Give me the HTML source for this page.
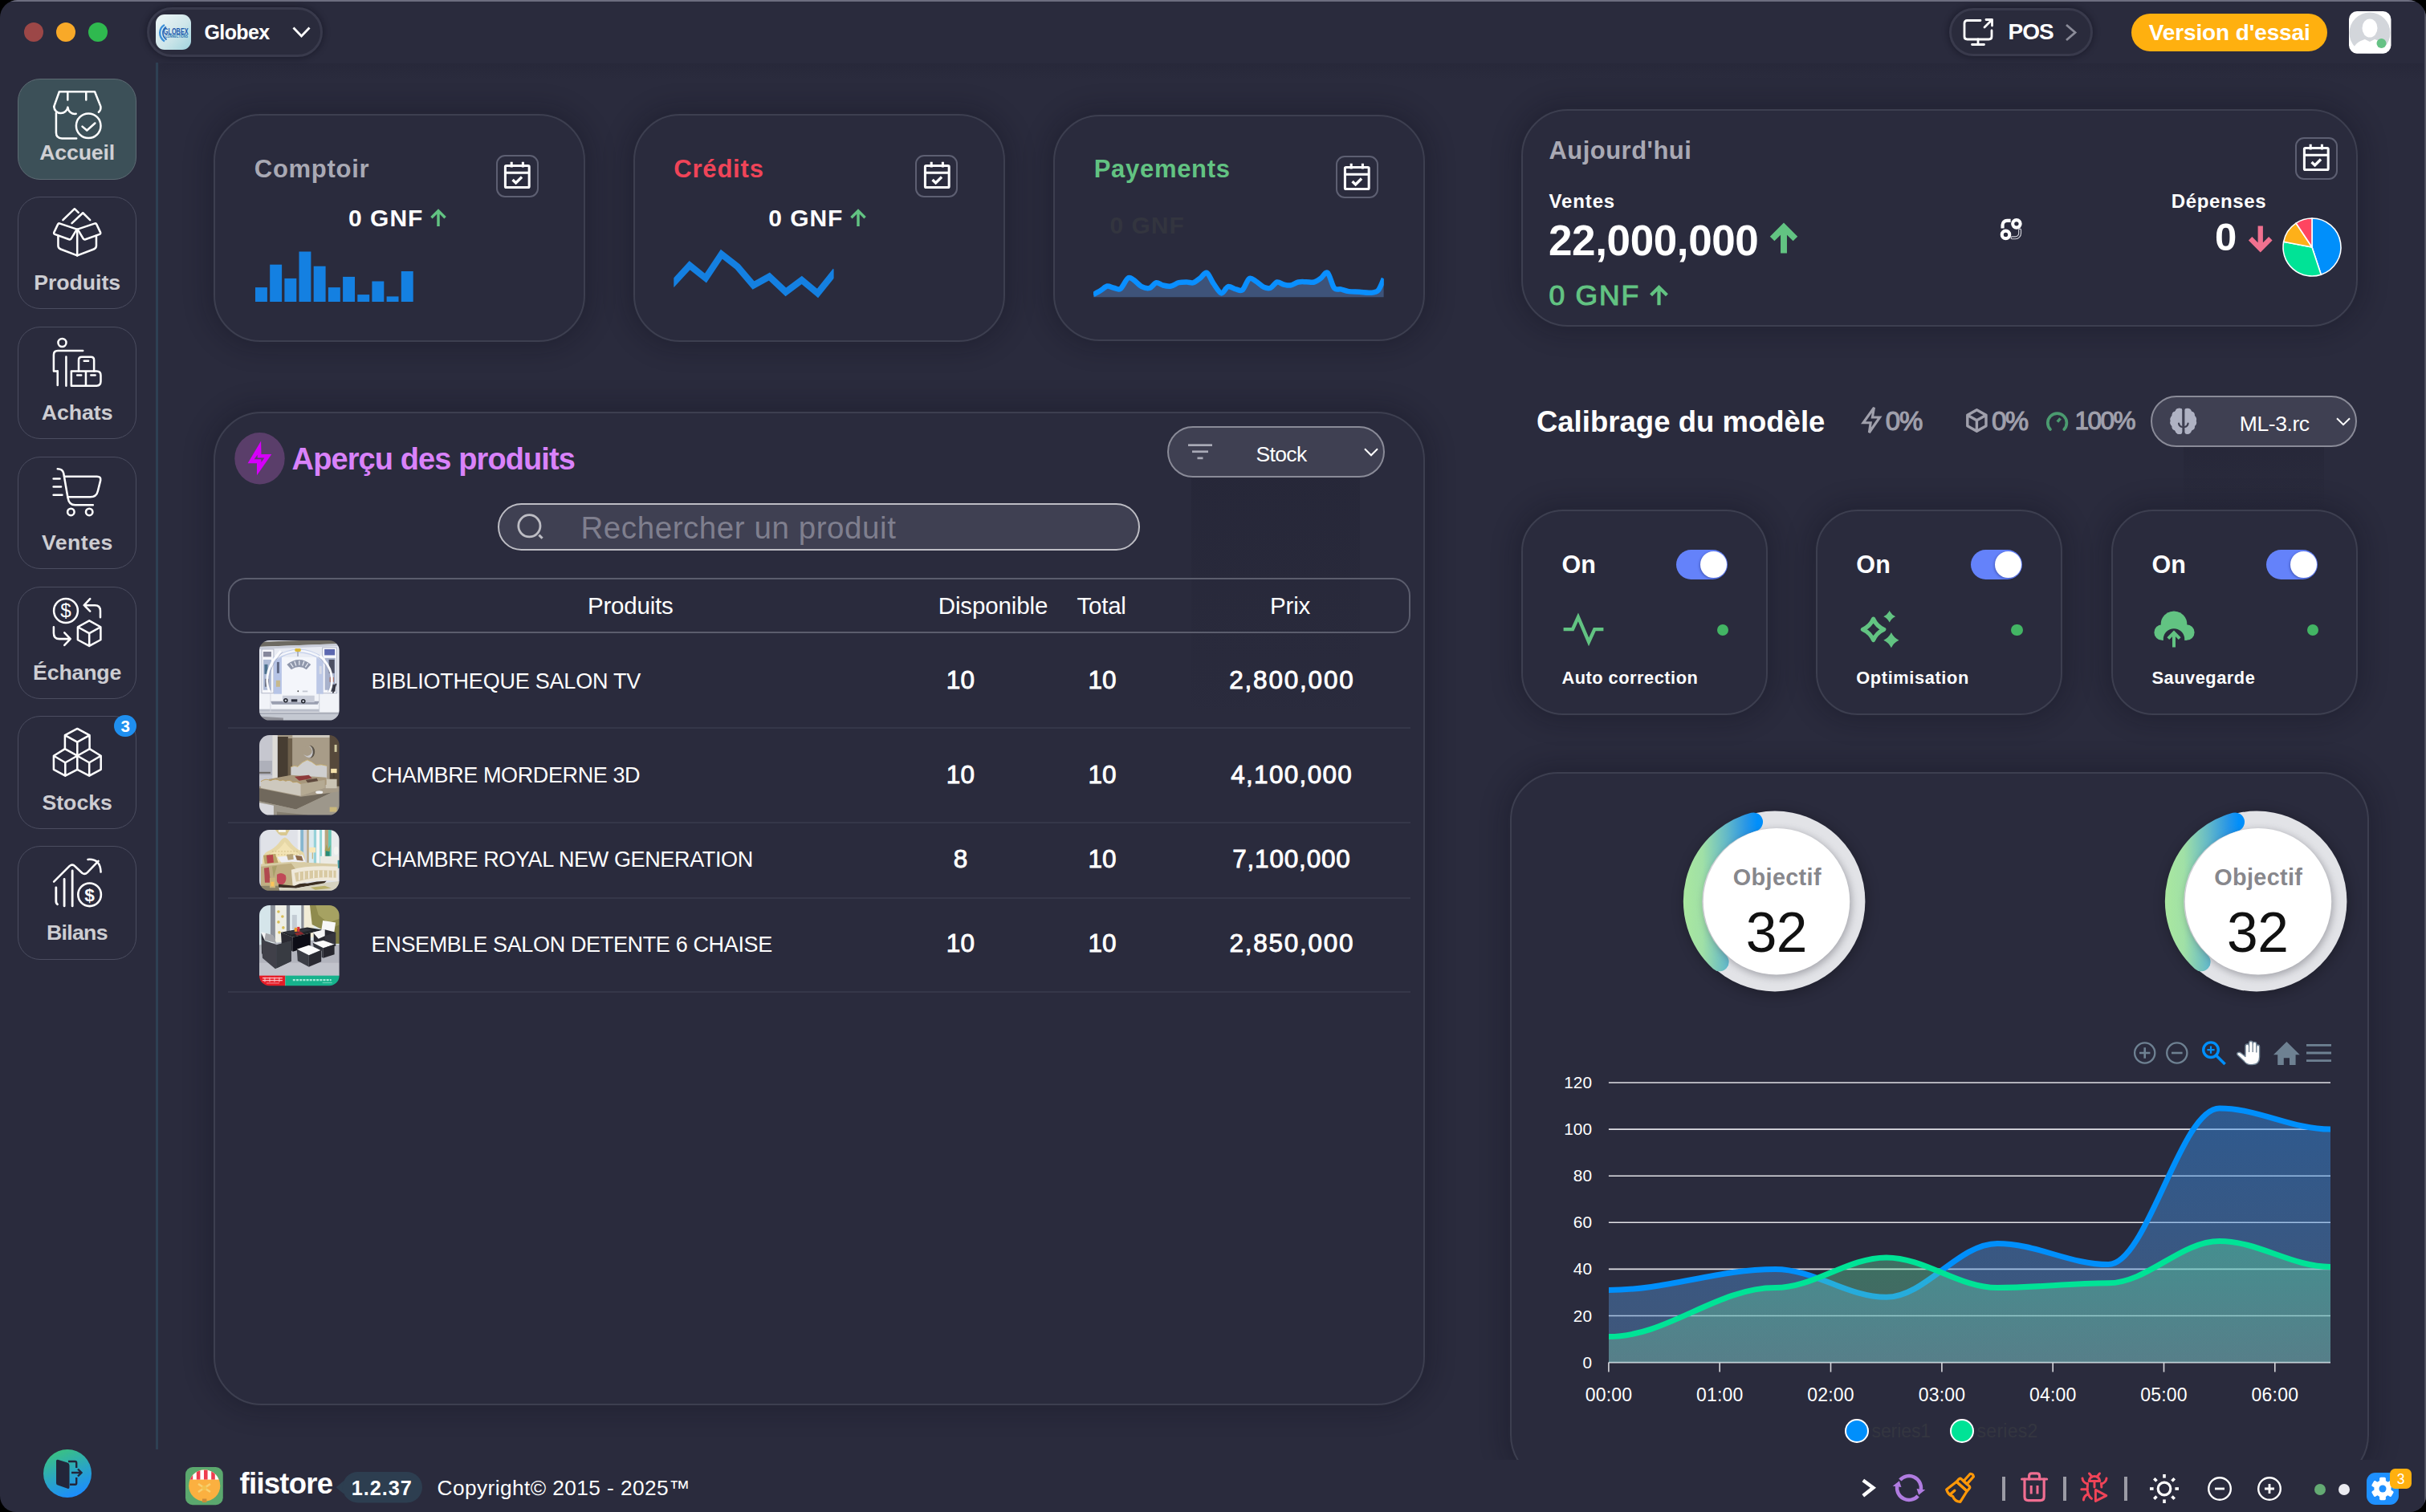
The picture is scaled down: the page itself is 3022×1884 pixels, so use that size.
<!DOCTYPE html>
<html lang="fr"><head><meta charset="utf-8"><title>fiistore</title>
<style>
html,body{margin:0;padding:0;}
body{width:3022px;height:1884px;overflow:hidden;background:#000;font-family:"Liberation Sans",sans-serif;}
#win{position:absolute;left:0;top:0;width:3022px;height:1884px;background:#2a2b3d;border-radius:22px 22px 20px 20px;overflow:hidden;}
.a{position:absolute;box-sizing:border-box;}
.t{position:absolute;white-space:nowrap;line-height:1;}
svg{overflow:visible;}
.card{background:#2a2b3d;border:2px solid #3d3f50;box-shadow:0 0 30px 9px rgba(12,12,24,0.24);}
.pill{background:#2a2b3c;border:3.5px solid #393a4c;box-shadow:0 0 7px 2px rgba(10,10,20,0.34);}
.calbox{border:2px solid #5d5f72;border-radius:11px;}
.sb{border:1.5px solid #4b4d60;border-radius:28px;}
.drop{background:#3f4052;border:2px solid #8a8b98;border-radius:33px;}
</style></head>
<body><div id="win">
<div class="a" style="left:0.0px;top:0.0px;width:3022.0px;height:2.0px;background:#6d6e80;"></div>
<div class="a" style="left:3020.0px;top:0.0px;width:2.0px;height:1884.0px;background:linear-gradient(to right,#3c3d4d,#5a5a68 60%);"></div>
<div class="a" style="left:198.0px;top:78.5px;width:2821.0px;height:21.5px;background:linear-gradient(to bottom, rgba(15,15,28,0.10), rgba(15,15,28,0));"></div>
<div class="a" style="left:29.7px;top:27.7px;width:24.6px;height:24.6px;border-radius:50%;background:#9c4747;"></div>
<div class="a" style="left:69.7px;top:27.7px;width:24.6px;height:24.6px;border-radius:50%;background:#f8a928;"></div>
<div class="a" style="left:109.7px;top:27.7px;width:24.6px;height:24.6px;border-radius:50%;background:#2fb94f;"></div>
<div class="a pill" style="left:183.0px;top:9.0px;width:219.0px;height:62.0px;border-radius:32px;"></div>
<svg class="a" style="left:194.0px;top:18.0px;" width="44.0" height="44.0" viewBox="0 0 44.00 44.00"><defs><linearGradient id="glg" x1="0" y1="0" x2="1" y2="1"><stop offset="0" stop-color="#eef6f7"/><stop offset="0.55" stop-color="#cfe6ea"/><stop offset="1" stop-color="#9fd3dd"/></linearGradient></defs><rect x="0" y="0" width="44" height="44" rx="11" fill="url(#glg)"/><path d="M11 13C3.5 17 3 28 11 33.5" fill="none" stroke="#3b8fd8" stroke-width="2.4"/><path d="M13 15.5C7.5 19 7.5 27 13.5 31.5" fill="none" stroke="#2a6fc0" stroke-width="1.8"/><text x="25.2" y="24.8" font-family="Liberation Sans, sans-serif" font-weight="700" font-size="10.4" fill="#1c58ad" text-anchor="middle" textLength="31" lengthAdjust="spacingAndGlyphs">GLOBEX</text><text x="26" y="29.2" font-family="Liberation Sans, sans-serif" font-weight="700" font-size="4.6" fill="#1f6fb0" text-anchor="middle" textLength="28" lengthAdjust="spacingAndGlyphs">CONNECTIONS</text></svg>
<div class="t" style="left:254.5px;top:28.4px;font-size:25.0px;color:#fff;font-weight:700;letter-spacing:-0.62px;">Globex</div>
<svg class="a" style="left:364.0px;top:33.0px;" width="23.0" height="14.0" viewBox="0 0 23 14"><path d="M1.5 1.5L11.5 12L21.5 1.5" fill="none" stroke="#fff" stroke-width="2.8" stroke-linecap="butt" stroke-linejoin="miter" /></svg>
<div class="a pill" style="left:2428.0px;top:10.0px;width:179.0px;height:60.0px;border-radius:31px;"></div>
<svg class="a" style="left:2445.0px;top:23.0px;" width="39.0" height="34.0" viewBox="0 0 39 34"><path d="M22 2.5H5.5Q2 2.5 2 6V22.5Q2 26 5.5 26H32.5Q36 26 36 22.5V15" fill="none" stroke="#fff" stroke-width="2.8" stroke-linecap="round" stroke-linejoin="round" /><path d="M19 26V32M11.5 32.5H26.5" fill="none" stroke="#fff" stroke-width="2.8" stroke-linecap="round" stroke-linejoin="round" /><path d="M27 11L36.5 1.5M29 1.5H36.5V9" fill="none" stroke="#fff" stroke-width="2.8" stroke-linecap="round" stroke-linejoin="round" /></svg>
<div class="t" style="left:2501.5px;top:25.9px;font-size:28.0px;color:#fff;font-weight:700;letter-spacing:-1.04px;">POS</div>
<svg class="a" style="left:2572.0px;top:29.0px;" width="15.0" height="23.0" viewBox="0 0 15 23"><path d="M2 2L13 11.5L2 21" fill="none" stroke="#8b8c99" stroke-width="2.8" stroke-linecap="butt" stroke-linejoin="miter" /></svg>
<div class="a" style="left:2655.0px;top:17.0px;width:243.5px;height:47.0px;border-radius:24px;background:#ffb00f;"></div>
<div class="t" style="left:2676.7px;top:26.6px;font-size:28.0px;color:#fff;font-weight:700;letter-spacing:-0.12px;">Version d'essai</div>
<svg class="a" style="left:2926.0px;top:14.0px;" width="52.5" height="52.5" viewBox="0 0 52.5 52.5"><defs><clipPath id="avc"><rect x="0" y="0" width="52.5" height="52.5" rx="10"/></clipPath></defs><rect x="0" y="0" width="52.5" height="52.5" rx="10" fill="#fff"/><g clip-path="url(#avc)"><circle cx="26" cy="27" r="25.5" fill="#d3d6db"/><ellipse cx="26" cy="21" rx="9.5" ry="11.5" fill="#fff"/><path d="M4 56C4 40 14 37 20 35L26 38L32 35C38 37 48 40 48 56Z" fill="#fff"/></g><circle cx="40.5" cy="40" r="6" fill="#66c285"/></svg>
<div class="a sb" style="left:22.2px;top:98.2px;width:147.8px;height:125.6px;background:#3c5058;border-color:#5d6b73;"></div>
<svg class="a" style="left:66.0px;top:113.0px;" width="60.4" height="60.4" viewBox="0 0 60 60"><path d="M7.8 1.2H51.7L59 19.5Q59.6 24 56.5 26.5M7.8 1.2L1.2 19.8" fill="none" stroke="#fff" stroke-width="2.5" stroke-linecap="round" stroke-linejoin="round" /><path d="M18.2 1.2V11.5M41 1.2V11.5" fill="none" stroke="#fff" stroke-width="2.5" stroke-linecap="round" stroke-linejoin="round" /><path d="M1.2 19.8A8.6 8.6 0 0 0 18.3 20.5A8.8 8.8 0 0 0 28.5 28.6" fill="none" stroke="#fff" stroke-width="2.5" stroke-linecap="round" stroke-linejoin="round" /><path d="M3.9 27.5V52Q3.9 59 11 59H29" fill="none" stroke="#fff" stroke-width="2.5" stroke-linecap="round" stroke-linejoin="round" /><circle cx="43.9" cy="43.5" r="15.2" fill="none" stroke="#fff" stroke-width="2.5" stroke-linecap="round" stroke-linejoin="round" /><path d="M36.3 44.3L42 49.2L52 40.2" fill="none" stroke="#fff" stroke-width="2.5" stroke-linecap="round" stroke-linejoin="round" /></svg>
<div class="t" style="left:96.2px;top:177.4px;font-size:26.7px;color:#d0d0d4;font-weight:700;transform:translateX(-50%);margin-left:-0.07px;letter-spacing:-0.14px;">Accueil</div>
<div class="a sb" style="left:22.2px;top:245.0px;width:147.8px;height:140.0px;"></div>
<svg class="a" style="left:66.0px;top:258.6px;" width="60.4" height="60.4" viewBox="0 0 60 60"><path d="M12.3 15L26.7 1.2L31.5 5.8M23.4 19L37 6.2L45.9 15" fill="none" stroke="#fff" stroke-width="2.5" stroke-linecap="round" stroke-linejoin="round" /><path d="M8 19.3L29.5 26.4L22.4 38.3Q21.5 39.6 19.8 39L2.2 32.6Q0.6 31.9 1.4 30.2L6 20.5Q6.7 19 8 19.3Z" fill="none" stroke="#fff" stroke-width="2.5" stroke-linecap="round" stroke-linejoin="round" /><path d="M52 19.3L30.5 26.4L37.6 38.3Q38.5 39.6 40.2 39L57.8 32.6Q59.4 31.9 58.6 30.2L54 20.5Q53.3 19 52 19.3Z" fill="none" stroke="#fff" stroke-width="2.5" stroke-linecap="round" stroke-linejoin="round" /><path d="M6.4 34.5V47Q6.4 50 9.5 51.2L30 59L50.5 51.2Q53.6 50 53.6 47V34.5" fill="none" stroke="#fff" stroke-width="2.5" stroke-linecap="round" stroke-linejoin="round" /><path d="M30 26.7V59" fill="none" stroke="#fff" stroke-width="2.5" stroke-linecap="round" stroke-linejoin="round" /></svg>
<div class="t" style="left:96.2px;top:339.4px;font-size:26.7px;color:#cdcdd2;font-weight:700;transform:translateX(-50%);margin-left:-0.02px;letter-spacing:-0.04px;">Produits</div>
<div class="a sb" style="left:22.2px;top:406.6px;width:147.8px;height:140.8px;"></div>
<svg class="a" style="left:66.0px;top:421.2px;" width="60.4" height="60.4" viewBox="0 0 60 60"><circle cx="11.4" cy="5.9" r="5" fill="none" stroke="#fff" stroke-width="2.5" stroke-linecap="round" stroke-linejoin="round" /><path d="M37 15.9H6Q0.9 15.9 0.9 21V41.3H5.7" fill="none" stroke="#fff" stroke-width="2.5" stroke-linecap="round" stroke-linejoin="round" /><path d="M5.7 41.3V58.5M16.3 23.3V59.3" fill="none" stroke="#fff" stroke-width="2.5" stroke-linecap="round" stroke-linejoin="round" /><path d="M31.8 41.3V27.5Q31.8 23.7 35.6 23.7H47Q50.8 23.7 50.8 27.5V41.3" fill="none" stroke="#fff" stroke-width="2.5" stroke-linecap="round" stroke-linejoin="round" /><path d="M40.7 59.3H22.7V41.3H54Q59.1 41.3 59.1 46.5V54Q59.1 59.3 54 59.3H40.7V41.3" fill="none" stroke="#fff" stroke-width="2.5" stroke-linecap="round" stroke-linejoin="round" /><path d="M38.5 28.6H43.8M30 46.2H35M47 46.2H52.3" fill="none" stroke="#fff" stroke-width="2.5" stroke-linecap="round" stroke-linejoin="round" /></svg>
<div class="t" style="left:96.2px;top:501.2px;font-size:26.7px;color:#cdcdd2;font-weight:700;transform:translateX(-50%);margin-left:-0.04px;letter-spacing:-0.07px;">Achats</div>
<div class="a sb" style="left:22.2px;top:568.6px;width:147.8px;height:140.8px;"></div>
<svg class="a" style="left:66.0px;top:583.1px;" width="60.4" height="60.4" viewBox="0 0 60 60"><path d="M5.7 1.2Q11.8 1.2 13.1 6.5L18.4 37Q19.8 46 27.5 46H49.5" fill="none" stroke="#fff" stroke-width="2.5" stroke-linecap="round" stroke-linejoin="round" /><path d="M15.2 10.6H54.5Q59.6 10.6 58.8 15.5L55.4 29Q53.8 36 46 36H18.4" fill="none" stroke="#fff" stroke-width="2.5" stroke-linecap="round" stroke-linejoin="round" /><path d="M0.6 13.3H8.5M0.6 23.3H10M0.6 33.5H11.4" fill="none" stroke="#fff" stroke-width="2.5" stroke-linecap="round" stroke-linejoin="round" /><circle cx="22.2" cy="54.6" r="4.2" fill="none" stroke="#fff" stroke-width="2.5" stroke-linecap="round" stroke-linejoin="round" /><circle cx="44.9" cy="54.6" r="4.2" fill="none" stroke="#fff" stroke-width="2.5" stroke-linecap="round" stroke-linejoin="round" /></svg>
<div class="t" style="left:96.2px;top:663.2px;font-size:26.7px;color:#cdcdd2;font-weight:700;transform:translateX(-50%);margin-left:0.21px;letter-spacing:0.42px;">Ventes</div>
<div class="a sb" style="left:22.2px;top:730.6px;width:147.8px;height:140.8px;"></div>
<svg class="a" style="left:66.0px;top:745.1px;" width="60.4" height="60.4" viewBox="0 0 60 60"><circle cx="15.9" cy="15.9" r="14.8" fill="none" stroke="#fff" stroke-width="2.5" stroke-linecap="round" stroke-linejoin="round" /><text x="15.9" y="24.2" text-anchor="middle" font-family="Liberation Sans, sans-serif" font-size="24" fill="#fff">$</text><path d="M45.9 1.2L38.5 9.1L45.9 16.5M38.8 9.1H52Q58.6 9.1 58.6 16V24" fill="none" stroke="#fff" stroke-width="2.5" stroke-linecap="round" stroke-linejoin="round" /><path d="M0.9 36V43.4Q0.9 50.8 8 50.8H21.4M14.2 43L21.6 50.8L14.2 58.6" fill="none" stroke="#fff" stroke-width="2.5" stroke-linecap="round" stroke-linejoin="round" /><path d="M44.9 28.2L59 36V51.9L44.9 59.5L30.7 51.9V36ZM30.7 36L44.9 43.8L59 36M44.9 43.8V59.5" fill="none" stroke="#fff" stroke-width="2.5" stroke-linecap="round" stroke-linejoin="round" /></svg>
<div class="t" style="left:96.2px;top:824.5px;font-size:26.7px;color:#cdcdd2;font-weight:700;transform:translateX(-50%);margin-left:-0.09px;letter-spacing:-0.18px;">Échange</div>
<div class="a sb" style="left:22.2px;top:892.2px;width:147.8px;height:140.8px;"></div>
<svg class="a" style="left:66.0px;top:907.3px;" width="60.4" height="60.4" viewBox="0 0 60 60"><path d="M30.1 0.9L45.3 9.1V26L30.1 34.5L14.8 26V9.1ZM14.8 9.1L30.1 17.6L45.3 9.1M30.1 17.6V34.5" fill="none" stroke="#fff" stroke-width="2.5" stroke-linecap="round" stroke-linejoin="round" /><path d="M14.8 26L0.9 34.5V51.5L15.2 59.3L30.1 51.5V34.5M0.9 34.5L15.2 43L30.1 34.5M15.2 43V59.3" fill="none" stroke="#fff" stroke-width="2.5" stroke-linecap="round" stroke-linejoin="round" /><path d="M45.3 26L59.3 34.5V51.5L44.9 59.3L30.1 51.5M59.3 34.5L44.9 43L30.1 34.5M44.9 43V59.3" fill="none" stroke="#fff" stroke-width="2.5" stroke-linecap="round" stroke-linejoin="round" /></svg>
<div class="t" style="left:96.2px;top:987.2px;font-size:26.7px;color:#cdcdd2;font-weight:700;transform:translateX(-50%);margin-left:0.00px;">Stocks</div>
<div class="a" style="left:142.3px;top:890.7px;width:27.6px;height:27.6px;border-radius:50%;background:#1f8fef;"></div>
<div class="t" style="left:156.1px;top:894.6px;font-size:20.5px;color:#fff;font-weight:700;transform:translateX(-50%);margin-left:0.00px;">3</div>
<div class="a sb" style="left:22.2px;top:1054.3px;width:147.8px;height:141.6px;"></div>
<svg class="a" style="left:66.0px;top:1068.5px;" width="60.4" height="60.4" viewBox="0 0 60 60"><path d="M1.1 29.5L20.7 9.8Q24 7 27.3 10.4L36 18.6Q39.3 21.2 42.6 18L56.2 3.8" fill="none" stroke="#fff" stroke-width="2.5" stroke-linecap="round" stroke-linejoin="round" /><path d="M43.1 1.9Q58.5 0.5 59.2 17.5" fill="none" stroke="#fff" stroke-width="2.5" stroke-linecap="round" stroke-linejoin="round" /><path d="M3.8 36.6V53.5Q3.8 56.5 5.5 57.3M14 26.2V59.5M24 15.8V59.5" fill="none" stroke="#fff" stroke-width="2.8" stroke-linecap="round" stroke-linejoin="round" /><circle cx="45.3" cy="45.5" r="14.2" fill="none" stroke="#fff" stroke-width="2.6" stroke-linecap="round" stroke-linejoin="round" /><text x="45.3" y="53.3" text-anchor="middle" font-family="Liberation Sans, sans-serif" font-size="22.5" font-weight="700" fill="#fff">$</text></svg>
<div class="t" style="left:96.2px;top:1149.4px;font-size:26.7px;color:#cdcdd2;font-weight:700;transform:translateX(-50%);margin-left:-0.34px;letter-spacing:-0.69px;">Bilans</div>
<div class="a" style="left:193.5px;top:78.0px;width:3.0px;height:1728.0px;background:#2e4053;"></div>
<svg class="a" style="left:53.5px;top:1806.2px;" width="60.0" height="60.0" viewBox="0 0 60 60"><defs><linearGradient id="lgo" x1="0.2" y1="0" x2="0.6" y2="1"><stop offset="0" stop-color="#3cc47c"/><stop offset="1" stop-color="#1b8cff"/></linearGradient></defs><circle cx="30" cy="30" r="30" fill="url(#lgo)"/><path d="M16 14.5Q16 12.5 18 12.8L30 16.5Q32.5 17.3 32.5 20V47Q32.5 49.6 30.2 48.8L18 44.6Q16 44 16 42Z" fill="#23263a"/><path d="M31 15H39.5Q41.2 15 41.2 16.8V23M41.2 35V42Q41.2 43.8 39.5 43.8H33" fill="none" stroke="#23263a" stroke-width="2.4"/><path d="M35 29H47M43 24.5L47.5 29L43 33.5" fill="none" stroke="#23263a" stroke-width="2.4"/></svg>
<div class="a card" style="left:266.0px;top:142.0px;width:462.5px;height:284.0px;border-radius:58px;"></div>
<div class="t" style="left:316.8px;top:194.8px;font-size:31.0px;color:#a9a9b4;font-weight:700;letter-spacing:0.72px;">Comptoir</div>
<div class="a calbox" style="left:617.5px;top:192.5px;width:53.0px;height:53.0px;"></div>
<svg class="a" style="left:623.7px;top:198.2px;" width="40.6" height="40.6" viewBox="0 0 24 24"><rect x="3.2" y="5" width="17.6" height="16" rx="0.8" fill="none" stroke="#fff" stroke-width="1.8" stroke-linecap="butt" stroke-linejoin="miter" /><path d="M3.2 10.2H20.8" fill="none" stroke="#fff" stroke-width="1.8" stroke-linecap="butt" stroke-linejoin="miter" /><path d="M7.8 2.2V6.2M16.2 2.2V6.2" fill="none" stroke="#fff" stroke-width="1.8" stroke-linecap="butt" stroke-linejoin="miter" /><path d="M8.6 15.4L11 17.7L15.4 13.3" fill="none" stroke="#fff" stroke-width="2.0" stroke-linecap="butt" stroke-linejoin="miter" /></svg>
<div class="t" style="left:434.0px;top:257.3px;font-size:30.0px;color:#fff;font-weight:700;letter-spacing:1.01px;">0 GNF</div>
<svg class="a" style="left:534.5px;top:261.0px;overflow:visible;" width="22.0" height="22.0" viewBox="2 2 20 20.5"><path d="M12 21.5V3.5M4 11.5L12 3.5L20 11.5" fill="none" stroke="#62c382" stroke-width="3.2" stroke-linecap="butt" stroke-linejoin="miter" /></svg>
<svg class="a" style="left:317.5px;top:313.0px;" width="197.0" height="63.0" viewBox="0 0 197.00 63.00"><rect x="0.0" y="45.1" width="14.9" height="17.9" fill="#1480e1"/><rect x="18.2" y="16.7" width="14.9" height="46.3" fill="#1480e1"/><rect x="36.4" y="33.9" width="14.9" height="29.1" fill="#1480e1"/><rect x="54.5" y="0.5" width="14.9" height="62.5" fill="#1480e1"/><rect x="72.7" y="18.7" width="14.9" height="44.3" fill="#1480e1"/><rect x="90.9" y="45.1" width="14.9" height="17.9" fill="#1480e1"/><rect x="109.1" y="31.9" width="14.9" height="31.1" fill="#1480e1"/><rect x="127.3" y="54.1" width="14.9" height="8.9" fill="#1480e1"/><rect x="145.4" y="37.5" width="14.9" height="25.5" fill="#1480e1"/><rect x="163.6" y="56.4" width="14.9" height="6.6" fill="#1480e1"/><rect x="181.8" y="25.0" width="14.9" height="38.0" fill="#1480e1"/></svg>
<div class="a card" style="left:789.0px;top:142.0px;width:462.5px;height:284.0px;border-radius:58px;"></div>
<div class="t" style="left:839.3px;top:194.8px;font-size:31.0px;color:#f04458;font-weight:700;letter-spacing:0.80px;">Crédits</div>
<div class="a calbox" style="left:1140.3px;top:192.5px;width:53.0px;height:53.0px;"></div>
<svg class="a" style="left:1146.5px;top:198.2px;" width="40.6" height="40.6" viewBox="0 0 24 24"><rect x="3.2" y="5" width="17.6" height="16" rx="0.8" fill="none" stroke="#fff" stroke-width="1.8" stroke-linecap="butt" stroke-linejoin="miter" /><path d="M3.2 10.2H20.8" fill="none" stroke="#fff" stroke-width="1.8" stroke-linecap="butt" stroke-linejoin="miter" /><path d="M7.8 2.2V6.2M16.2 2.2V6.2" fill="none" stroke="#fff" stroke-width="1.8" stroke-linecap="butt" stroke-linejoin="miter" /><path d="M8.6 15.4L11 17.7L15.4 13.3" fill="none" stroke="#fff" stroke-width="2.0" stroke-linecap="butt" stroke-linejoin="miter" /></svg>
<div class="t" style="left:957.3px;top:257.3px;font-size:30.0px;color:#fff;font-weight:700;letter-spacing:0.93px;">0 GNF</div>
<svg class="a" style="left:1057.5px;top:261.0px;overflow:visible;" width="22.0" height="22.0" viewBox="2 2 20 20.5"><path d="M12 21.5V3.5M4 11.5L12 3.5L20 11.5" fill="none" stroke="#62c382" stroke-width="3.2" stroke-linecap="butt" stroke-linejoin="miter" /></svg>
<svg class="a" style="left:830.0px;top:300.0px;" width="220.0" height="80.0" viewBox="0 0 220.00 80.00"><defs><clipPath id="ccl"><rect x="9.3" y="0" width="199.3" height="80"/></clipPath></defs><path d="M9.3 52.2L29.1 30.7L49.0 46.6L68.8 16.8L88.7 32.3L108.5 55.5L128.3 44.6L148.8 63.8L168.7 48.9L188.5 65.4L208.4 40.6" fill="none" stroke="#1480e1" stroke-width="8.2" stroke-linejoin="miter" stroke-linecap="square" clip-path="url(#ccl)"/></svg>
<div class="a card" style="left:1312.4px;top:143.0px;width:462.4px;height:282.0px;border-radius:58px;"></div>
<div class="t" style="left:1362.7px;top:195.1px;font-size:31.0px;color:#62c382;font-weight:700;letter-spacing:0.70px;">Payements</div>
<div class="a calbox" style="left:1663.6px;top:193.8px;width:53.0px;height:53.0px;"></div>
<svg class="a" style="left:1669.8px;top:199.5px;" width="40.6" height="40.6" viewBox="0 0 24 24"><rect x="3.2" y="5" width="17.6" height="16" rx="0.8" fill="none" stroke="#fff" stroke-width="1.8" stroke-linecap="butt" stroke-linejoin="miter" /><path d="M3.2 10.2H20.8" fill="none" stroke="#fff" stroke-width="1.8" stroke-linecap="butt" stroke-linejoin="miter" /><path d="M7.8 2.2V6.2M16.2 2.2V6.2" fill="none" stroke="#fff" stroke-width="1.8" stroke-linecap="butt" stroke-linejoin="miter" /><path d="M8.6 15.4L11 17.7L15.4 13.3" fill="none" stroke="#fff" stroke-width="2.0" stroke-linecap="butt" stroke-linejoin="miter" /></svg>
<div class="t" style="left:1382.5px;top:266.3px;font-size:30.0px;color:#33353f;font-weight:700;letter-spacing:0.99px;">0 GNF</div>
<svg class="a" style="left:1362.0px;top:330.0px;" width="362.0" height="42.0" viewBox="0 0 362.00 42.00"><defs><clipPath id="pcl"><rect x="0" y="-20" width="361.8" height="60.4"/></clipPath></defs><g clip-path="url(#pcl)"><path d="M0.0 37.1C1.4 36.3 6.2 33.8 8.9 32.1C11.7 30.4 14.6 27.0 17.2 26.5C19.9 26.0 22.8 28.3 25.5 28.8C28.1 29.3 30.9 31.7 33.7 29.8C36.5 27.8 40.4 18.3 43.0 16.6C45.6 14.8 47.5 17.2 50.3 18.9C53.0 20.6 57.0 25.6 60.2 27.1C63.4 28.7 67.2 29.6 70.1 28.8C73.0 28.0 75.7 22.7 78.4 22.2C81.0 21.7 83.7 24.8 86.7 25.5C89.6 26.2 93.4 27.0 96.6 26.5C99.7 26.0 103.3 23.0 106.5 22.2C109.7 21.4 113.5 21.5 116.4 21.5C119.3 21.5 122.0 23.0 124.7 22.2C127.3 21.4 130.3 18.5 132.9 16.6C135.6 14.6 138.6 8.9 141.2 9.9C143.9 11.0 146.6 19.1 149.5 23.2C152.4 27.2 156.5 34.8 159.4 35.4C162.3 36.0 164.8 27.9 167.7 27.1C170.6 26.3 174.7 29.8 177.6 30.4C180.5 31.1 183.2 33.2 185.9 31.1C188.5 29.0 191.5 18.9 194.1 17.2C196.8 15.5 199.5 18.8 202.4 20.5C205.3 22.2 209.4 26.5 212.3 27.8C215.2 29.1 217.9 29.8 220.6 28.8C223.2 27.8 226.2 22.2 228.8 21.5C231.5 20.8 234.5 23.9 237.1 24.5C239.8 25.1 242.5 26.0 245.4 25.5C248.3 25.0 252.1 22.2 255.3 21.5C258.5 20.8 262.0 21.2 265.2 21.2C268.4 21.2 272.2 22.3 275.1 21.5C278.1 20.8 280.8 18.4 283.4 16.6C286.1 14.7 289.0 8.0 291.7 9.9C294.3 11.9 297.3 25.5 299.9 28.8C302.6 32.1 305.3 29.8 308.2 30.4C311.1 31.1 314.4 32.6 318.1 33.1C321.8 33.6 327.1 33.5 331.4 33.8C335.6 34.0 340.9 35.0 344.6 34.7C348.3 34.5 351.8 34.9 354.5 32.1C357.3 29.3 360.6 19.6 361.8 17.2L361.8 40.4L0 40.4Z" fill="#3e5379"/><path d="M0.0 37.1C1.4 36.3 6.2 33.8 8.9 32.1C11.7 30.4 14.6 27.0 17.2 26.5C19.9 26.0 22.8 28.3 25.5 28.8C28.1 29.3 30.9 31.7 33.7 29.8C36.5 27.8 40.4 18.3 43.0 16.6C45.6 14.8 47.5 17.2 50.3 18.9C53.0 20.6 57.0 25.6 60.2 27.1C63.4 28.7 67.2 29.6 70.1 28.8C73.0 28.0 75.7 22.7 78.4 22.2C81.0 21.7 83.7 24.8 86.7 25.5C89.6 26.2 93.4 27.0 96.6 26.5C99.7 26.0 103.3 23.0 106.5 22.2C109.7 21.4 113.5 21.5 116.4 21.5C119.3 21.5 122.0 23.0 124.7 22.2C127.3 21.4 130.3 18.5 132.9 16.6C135.6 14.6 138.6 8.9 141.2 9.9C143.9 11.0 146.6 19.1 149.5 23.2C152.4 27.2 156.5 34.8 159.4 35.4C162.3 36.0 164.8 27.9 167.7 27.1C170.6 26.3 174.7 29.8 177.6 30.4C180.5 31.1 183.2 33.2 185.9 31.1C188.5 29.0 191.5 18.9 194.1 17.2C196.8 15.5 199.5 18.8 202.4 20.5C205.3 22.2 209.4 26.5 212.3 27.8C215.2 29.1 217.9 29.8 220.6 28.8C223.2 27.8 226.2 22.2 228.8 21.5C231.5 20.8 234.5 23.9 237.1 24.5C239.8 25.1 242.5 26.0 245.4 25.5C248.3 25.0 252.1 22.2 255.3 21.5C258.5 20.8 262.0 21.2 265.2 21.2C268.4 21.2 272.2 22.3 275.1 21.5C278.1 20.8 280.8 18.4 283.4 16.6C286.1 14.7 289.0 8.0 291.7 9.9C294.3 11.9 297.3 25.5 299.9 28.8C302.6 32.1 305.3 29.8 308.2 30.4C311.1 31.1 314.4 32.6 318.1 33.1C321.8 33.6 327.1 33.5 331.4 33.8C335.6 34.0 340.9 35.0 344.6 34.7C348.3 34.5 351.8 34.9 354.5 32.1C357.3 29.3 360.6 19.6 361.8 17.2" fill="none" stroke="#0a8fff" stroke-width="6.5" stroke-linejoin="round" stroke-linecap="butt"/></g></svg>
<div class="a card" style="left:1895.4px;top:136.2px;width:1042.0px;height:271.2px;border-radius:58px;"></div>
<div class="t" style="left:1929.4px;top:172.2px;font-size:31.0px;color:#a9a9b4;font-weight:700;letter-spacing:0.48px;">Aujourd'hui</div>
<div class="t" style="left:1929.4px;top:238.7px;font-size:24.0px;color:#fff;font-weight:700;letter-spacing:0.89px;">Ventes</div>
<div class="t" style="left:1929.0px;top:272.6px;font-size:53.0px;color:#fff;font-weight:700;letter-spacing:-0.38px;">22,000,000</div>
<svg class="a" style="left:2204.0px;top:279.8px;overflow:visible;" width="36.0" height="37.7" viewBox="2 2 20 20.5"><path d="M12 21.5V3.5M4 11.5L12 3.5L20 11.5" fill="none" stroke="#62c382" stroke-width="4.4" stroke-linecap="butt" stroke-linejoin="miter" /></svg>
<div class="t" style="left:1929.4px;top:350.9px;font-size:35.5px;color:#62c382;font-weight:400;letter-spacing:1.79px;-webkit-text-stroke:1.10px #62c382;">0 GNF</div>
<svg class="a" style="left:2053.5px;top:355.5px;overflow:visible;" width="25.0" height="25.5" viewBox="2 2 20 20.5"><path d="M12 21.5V3.5M4 11.5L12 3.5L20 11.5" fill="none" stroke="#62c382" stroke-width="3.4" stroke-linecap="butt" stroke-linejoin="miter" /></svg>
<svg class="a" style="left:2491.5px;top:272.2px;" width="27.0" height="27.2" viewBox="0 0 27 27.2"><circle cx="19.9" cy="6.85" r="4.75" fill="none" stroke="#fff" stroke-width="4.1"/><circle cx="6.5" cy="20.4" r="4.75" fill="none" stroke="#fff" stroke-width="4.1"/><path d="M2.55 12.6V8.3A5.5 5.5 0 0 1 8.05 2.8H12.6" fill="none" stroke="#fff" stroke-width="4.2"/><path d="M24.1 14.6V18.8A5.5 5.5 0 0 1 18.6 24.3H14.4" fill="none" stroke="#d2d2da" stroke-width="4.0" stroke-linecap="round"/><path d="M24.1 14.6V18.8A5.5 5.5 0 0 1 18.6 24.3H14.4" fill="none" stroke="#2a2b3d" stroke-width="1.7" stroke-linecap="round"/></svg>
<div class="a calbox" style="left:2858.7px;top:170.7px;width:53.0px;height:53.0px;"></div>
<svg class="a" style="left:2864.9px;top:176.4px;" width="40.6" height="40.6" viewBox="0 0 24 24"><rect x="3.2" y="5" width="17.6" height="16" rx="0.8" fill="none" stroke="#fff" stroke-width="1.8" stroke-linecap="butt" stroke-linejoin="miter" /><path d="M3.2 10.2H20.8" fill="none" stroke="#fff" stroke-width="1.8" stroke-linecap="butt" stroke-linejoin="miter" /><path d="M7.8 2.2V6.2M16.2 2.2V6.2" fill="none" stroke="#fff" stroke-width="1.8" stroke-linecap="butt" stroke-linejoin="miter" /><path d="M8.6 15.4L11 17.7L15.4 13.3" fill="none" stroke="#fff" stroke-width="2.0" stroke-linecap="butt" stroke-linejoin="miter" /></svg>
<div class="t" style="left:2704.8px;top:238.7px;font-size:24.0px;color:#fff;font-weight:700;letter-spacing:0.64px;">Dépenses</div>
<div class="t" style="left:2759.0px;top:271.1px;font-size:49.0px;color:#fff;font-weight:700;letter-spacing:2.25px;">0</div>
<svg class="a" style="left:2799.5px;top:279.5px;" width="31.5" height="32.3" viewBox="2 1.5 20 20.5"><path d="M12 2.5V20.5M4 12.5L12 20.5L20 12.5" fill="none" stroke="#f0718f" stroke-width="4.0" stroke-linecap="butt" stroke-linejoin="miter" /></svg>
<svg class="a" style="left:2842.2px;top:269.6px;" width="76.0" height="76.0" viewBox="-38 -38 76 76"><path d="M0 0L0.00 -36.00A36.0 36.0 0 0 1 11.30 34.18Z" fill="#008ffb" stroke="#fff" stroke-width="1.6" stroke-linejoin="round"/><path d="M0 0L11.30 34.18A36.0 36.0 0 0 1 -35.36 -6.75Z" fill="#00e396" stroke="#fff" stroke-width="1.6" stroke-linejoin="round"/><path d="M0 0L-35.36 -6.75A36.0 36.0 0 0 1 -19.97 -29.95Z" fill="#feb019" stroke="#fff" stroke-width="1.6" stroke-linejoin="round"/><path d="M0 0L-19.97 -29.95A36.0 36.0 0 0 1 -0.00 -36.00Z" fill="#ff4560" stroke="#fff" stroke-width="1.6" stroke-linejoin="round"/></svg>
<div class="a card" style="left:266.0px;top:513.0px;width:1508.8px;height:1238.0px;border-radius:60px;"></div>
<svg class="a" style="left:291.9px;top:538.7px;" width="63.0" height="64.4" viewBox="0 0 63 64.4"><ellipse cx="31.5" cy="32.2" rx="31.2" ry="32.2" fill="#5a3e6a"/><path d="M33.1 10.4L16.6 38.3L28.0 38.3L28.0 53.3L46.3 26.9L33.5 26.9Z" fill="#d500f9"/><path d="M28.7 27.7L24.7 33.2L33.4 33.2L33.4 37.1L37.4 31.5L28.7 31.5Z" fill="#5a3e6a"/></svg>
<div class="t" style="left:363.6px;top:552.8px;font-size:38.0px;color:#d982fa;font-weight:700;letter-spacing:-0.90px;">Aperçu des produits</div>
<div class="a" style="left:1484.0px;top:596.0px;width:210.0px;height:309.0px;background:linear-gradient(to bottom, rgba(20,20,34,0.16), rgba(20,20,34,0.0));"></div>
<div class="a drop" style="left:1454.0px;top:531.3px;width:271.0px;height:63.7px;"></div>
<svg class="a" style="left:1479.5px;top:553.0px;" width="30.0" height="20.0" viewBox="0 0 30 20"><rect x="0" y="0.3" width="30" height="2.7" fill="#a9aab6"/><rect x="5" y="8.4" width="20" height="2.7" fill="#a9aab6"/><rect x="11.5" y="16.5" width="7" height="2.7" fill="#a9aab6"/></svg>
<div class="t" style="left:1564.5px;top:552.8px;font-size:26.5px;color:#fff;font-weight:400;letter-spacing:-0.66px;">Stock</div>
<svg class="a" style="left:1699.0px;top:558.0px;" width="18.0" height="11.0" viewBox="0 0 18 11"><path d="M1 1.2L9 9.3L17 1.2" fill="none" stroke="#fff" stroke-width="2.0" stroke-linecap="butt" stroke-linejoin="miter" /></svg>
<div class="a" style="left:620.4px;top:626.8px;width:799.2px;height:59.6px;background:#3f4052;border:2.5px solid #bdbdc4;border-radius:30px;"></div>
<svg class="a" style="left:640.0px;top:636.0px;" width="42.0" height="42.0" viewBox="0 0 42 42"><circle cx="19.4" cy="19.3" r="13.6" fill="none" stroke="#bdbdc4" stroke-width="2.8"/><path d="M31.4 30.6L35.6 34.8" stroke="#bdbdc4" stroke-width="3" fill="none"/></svg>
<div class="t" style="left:723.5px;top:638.5px;font-size:38.5px;color:#7f7f8e;font-weight:400;letter-spacing:0.57px;">Rechercher un produit</div>
<div class="a" style="left:284.0px;top:719.7px;width:1472.8px;height:69.5px;border:2px solid #5b5d6d;border-radius:22px;"></div>
<div class="t" style="left:785.4px;top:740.2px;font-size:29.5px;color:#fff;font-weight:400;transform:translateX(-50%);margin-left:-0.11px;letter-spacing:-0.22px;">Produits</div>
<div class="t" style="left:1237.0px;top:740.2px;font-size:29.5px;color:#fff;font-weight:400;transform:translateX(-50%);margin-left:-0.06px;letter-spacing:-0.13px;">Disponible</div>
<div class="t" style="left:1372.2px;top:740.2px;font-size:29.5px;color:#fff;font-weight:400;transform:translateX(-50%);margin-left:-0.13px;letter-spacing:-0.26px;">Total</div>
<div class="t" style="left:1607.2px;top:740.2px;font-size:29.5px;color:#fff;font-weight:400;transform:translateX(-50%);margin-left:-0.10px;letter-spacing:-0.20px;">Prix</div>
<svg class="a" style="left:322.8px;top:798.0px;" width="99.6" height="99.6" viewBox="0 0 100 100.00"><defs><clipPath id="thc0"><rect x="0" y="0" width="100" height="100.00" rx="12.5"/></clipPath><filter id="thb0"><feGaussianBlur stdDeviation="0.45"/></filter></defs><g clip-path="url(#thc0)"><g filter="url(#thb0)"><rect x="-2" y="-2" width="104" height="104" fill="#e9ecf4"/><path d="M-2 2L102 -2V4L-2 8Z" fill="#6d6a62"/><path d="M-2 8L102 4V7L-2 11Z" fill="#c9cdd9"/><rect x="-2" y="89" width="104" height="13" fill="#c4c8d1"/><path d="M-2 95L30 97V102H-2Z" fill="#8f9098"/><path d="M-2 89H102V92H-2Z" fill="#a9adb8"/><rect x="0" y="66" width="100" height="24" fill="#f1f3f8"/><rect x="3" y="11" width="15" height="55" fill="#f6f7fb" stroke="#aeb3c4" stroke-width="0.9"/><rect x="79" y="9" width="18" height="57" fill="#f6f7fb" stroke="#aeb3c4" stroke-width="0.9"/><rect x="5" y="14" width="10" height="6.5" fill="#85879b"/><rect x="5" y="24" width="10" height="38" fill="#aebbd6"/><rect x="6.5" y="30" width="4" height="12" fill="#4b6f8c"/><rect x="7" y="48" width="5" height="10" fill="#6f7587"/><rect x="81.5" y="11" width="13" height="7.5" fill="#5b67b0"/><rect x="82" y="22" width="13" height="40" fill="#a8b2cc"/><rect x="87" y="24" width="7" height="17" fill="#4c4f62"/><rect x="88" y="46" width="5" height="6" fill="#b0563c"/><rect x="89" y="55" width="6" height="9" fill="#3d4050"/><rect x="18" y="20" width="11" height="47" fill="#b6c4e6"/><rect x="71" y="20" width="9" height="47" fill="#bcc8e6"/><rect x="22" y="27" width="3" height="14" fill="#5e6884"/><rect x="21" y="50" width="5" height="8" fill="#c6b88c"/><rect x="75" y="32" width="3" height="10" fill="#d8dbe6"/><path d="M18 24Q50 2 80 24" fill="none" stroke="#c5d0ea" stroke-width="5"/><path d="M20 22Q50 4 78 22" fill="none" stroke="#f4f6fb" stroke-width="2.4"/><rect x="28" y="21" width="43.5" height="48" fill="#f4f6fb"/><path d="M34.5 30Q50 18 64.5 30L59 36.5Q50 30 40 36.5Z" fill="#8f97ab"/><path d="M39 28.6L42.5 33.5M44 26.2L46 31.6M50 25.2V30.8M56 26.2L54 31.6M61 28.6L57.5 33.5" stroke="#e8ebf3" stroke-width="1.3"/><path d="M12.5 64Q3 38 27 13" fill="none" stroke="#fbfcfe" stroke-width="2.8"/><path d="M14.8 64Q6 39 29 14.5" fill="none" stroke="#9ea6bf" stroke-width="0.7"/><path d="M88 64Q97.5 40 76 19" fill="none" stroke="#fbfcfe" stroke-width="2.8"/><path d="M85.8 64Q95 40.5 74 20.5" fill="none" stroke="#9ea6bf" stroke-width="0.7"/><path d="M92 66L96 54" stroke="#30323e" stroke-width="1.6"/><rect x="44.5" y="10" width="7.5" height="4" rx="1.5" fill="#d9b83a"/><rect x="47.6" y="14" width="1.2" height="6" fill="#8c93a6"/><path d="M14 76H75L73 80H16Z" fill="#9a9fb0"/><rect x="29" y="69" width="40" height="8.4" fill="#c9cdd9"/><circle cx="33" cy="75" r="2.8" fill="#23252f"/><circle cx="33" cy="75" r="1.3" fill="#c9cdd9"/><circle cx="55" cy="76" r="2.8" fill="#23252f"/><circle cx="55" cy="76" r="1.3" fill="#c9cdd9"/><rect x="40" y="73.6" width="7.5" height="3.2" fill="#2b2e3c"/><circle cx="48.5" cy="63.5" r="0.9" fill="#444"/><rect x="54" y="62.8" width="6.5" height="1.8" fill="#c3c7d2"/><rect x="0" y="86" width="75" height="3.2" fill="#b9bdc9"/><path d="M75 66V90" stroke="#c5c9d4" stroke-width="0.9"/><path d="M14 66V90" stroke="#d2d5de" stroke-width="0.9"/></g></g></svg>
<div class="t" style="left:462.6px;top:835.5px;font-size:27.0px;color:#fff;font-weight:400;letter-spacing:-0.22px;">BIBLIOTHEQUE SALON TV</div>
<div class="t" style="left:1196.4px;top:832.1px;font-size:31.5px;color:#fff;font-weight:400;transform:translateX(-50%);margin-left:0.00px;-webkit-text-stroke:0.90px #fff;">10</div>
<div class="t" style="left:1373.0px;top:832.1px;font-size:31.5px;color:#fff;font-weight:400;transform:translateX(-50%);margin-left:0.00px;-webkit-text-stroke:0.90px #fff;">10</div>
<div class="t" style="left:1608.5px;top:832.1px;font-size:31.5px;color:#fff;font-weight:400;transform:translateX(-50%);margin-left:0.90px;letter-spacing:1.81px;-webkit-text-stroke:0.90px #fff;">2,800,000</div>
<div class="a" style="left:284.0px;top:905.6px;width:1472.8px;height:2.0px;background:#353749;"></div>
<svg class="a" style="left:322.8px;top:916.0px;" width="99.6" height="99.6" viewBox="0 0 100 100.00"><defs><clipPath id="thc1"><rect x="0" y="0" width="100" height="100.00" rx="12.5"/></clipPath><filter id="thb1"><feGaussianBlur stdDeviation="0.45"/></filter></defs><g clip-path="url(#thc1)"><g filter="url(#thb1)"><rect x="-2" y="-2" width="104" height="104" fill="#a59a87"/><rect x="-2" y="-2" width="25" height="66" fill="#c6c7cf"/><rect x="-2" y="32" width="18" height="18" fill="#aeb0ba"/><rect x="16.5" y="-2" width="6" height="64" fill="#dedcd8"/><rect x="-2" y="46" width="16" height="2" fill="#6d6a66"/><rect x="23" y="2" width="13" height="54" fill="#473c30"/><rect x="36" y="4" width="5.5" height="50" fill="#6d5f4c"/><rect x="41.5" y="-2" width="47" height="50" fill="#a89c88"/><rect x="41.5" y="-2" width="47" height="5" fill="#cfcac0"/><rect x="88" y="-2" width="14" height="66" fill="#56493b"/><rect x="94" y="12" width="3" height="9" fill="#cfc9a0"/><circle cx="62" cy="21" r="7" fill="#c9c9cd"/><circle cx="59.8" cy="19.8" r="6.2" fill="#a89c88"/><path d="M63 12.5A8.6 8.6 0 0 1 63.5 29A11 11 0 0 0 63 12.5Z" fill="#5a5348"/><path d="M39.5 40Q44 37 48 39.5Q54 33 60 31Q66 33 71 37.5Q78 36 84.5 38.5V56H39.5Z" fill="#cfcfcf"/><path d="M39.5 40Q44 37 48 39.5Q54 33 60 31Q66 33 71 37.5Q78 36 84.5 38.5" fill="none" stroke="#c8ae6a" stroke-width="0.9"/><rect x="89.5" y="42" width="7.5" height="5.4" fill="#f5e2ac"/><rect x="92.6" y="47.4" width="1.3" height="6" fill="#4a3f33"/><rect x="83" y="55" width="14" height="11.5" fill="#cbc4b4"/><path d="M12 55L40 50L84 53V62L50 70L12 62Z" fill="#a8987c"/><path d="M44 52L62 50L66 54L50 57Z" fill="#8d3b3b"/><path d="M58 56L72 54L76 63L64 65Z" fill="#5e4a3c"/><path d="M2 58Q8 53.5 14 57Q20 53.5 26 57Q30 55 33 57.5Q38 55 42 59Q47 57 52 61V76L2 66Z" fill="#cdc8bd"/><path d="M2 58Q8 53.5 14 57Q20 53.5 26 57Q30 55 33 57.5Q38 55 42 59Q47 57 52 61" fill="none" stroke="#b89a5a" stroke-width="0.9"/><path d="M52 61L82 56V66L52 76Z" fill="#b5aa93"/><path d="M-2 66L52 77L90 72L46 93L-2 82Z" fill="#6f675b"/><path d="M-2 82L46 93L90 72L102 70V102H-2Z" fill="#9d978b"/><path d="M-2 84L18 88V102H-2Z" fill="#d9d9de"/><path d="M22 96L60 100V102H22Z" fill="#857e70"/><ellipse cx="75" cy="71.5" rx="4.6" ry="1.9" fill="#eeeeef"/><rect x="88" y="90" width="9" height="6" fill="#c9b77c"/></g></g></svg>
<div class="t" style="left:462.6px;top:952.9px;font-size:27.0px;color:#fff;font-weight:400;letter-spacing:-0.39px;">CHAMBRE MORDERNE 3D</div>
<div class="t" style="left:1196.4px;top:949.5px;font-size:31.5px;color:#fff;font-weight:400;transform:translateX(-50%);margin-left:0.00px;-webkit-text-stroke:0.90px #fff;">10</div>
<div class="t" style="left:1373.0px;top:949.5px;font-size:31.5px;color:#fff;font-weight:400;transform:translateX(-50%);margin-left:0.00px;-webkit-text-stroke:0.90px #fff;">10</div>
<div class="t" style="left:1608.5px;top:949.5px;font-size:31.5px;color:#fff;font-weight:400;transform:translateX(-50%);margin-left:0.66px;letter-spacing:1.32px;-webkit-text-stroke:0.90px #fff;">4,100,000</div>
<div class="a" style="left:284.0px;top:1023.7px;width:1472.8px;height:2.0px;background:#353749;"></div>
<svg class="a" style="left:322.8px;top:1034.0px;" width="99.6" height="75.8" viewBox="0 0 100 76.10"><defs><clipPath id="thc2"><rect x="0" y="0" width="100" height="76.10" rx="12.5"/></clipPath><filter id="thb2"><feGaussianBlur stdDeviation="0.45"/></filter></defs><g clip-path="url(#thc2)"><g filter="url(#thb2)"><rect x="-2" y="-2" width="104" height="80.1" fill="#e0e2e8"/><rect x="48" y="-2" width="3.5" height="50" fill="#eef0f2"/><rect x="51.5" y="-2" width="4" height="50" fill="#86b6cf"/><rect x="55.5" y="-2" width="4" height="50" fill="#d4d7dc"/><rect x="59.5" y="-2" width="2.6" height="50" fill="#b9a987"/><rect x="62.1" y="-2" width="6" height="50" fill="#dcebef"/><rect x="68.1" y="-2" width="3.4" height="50" fill="#96d2d8"/><rect x="71.5" y="-2" width="4" height="50" fill="#f4f6f6"/><rect x="75.5" y="-2" width="3" height="50" fill="#8fd6d6"/><rect x="78.5" y="-2" width="3.5" height="50" fill="#f6f7f7"/><rect x="82" y="-2" width="4.4" height="50" fill="#b7a57e"/><rect x="86.4" y="-2" width="3.8" height="50" fill="#67c6b4"/><rect x="90.2" y="-2" width="12" height="50" fill="#e9ebec"/><path d="M20 0H38L34 7H27L24 5Z" fill="#d9c890"/><rect x="24" y="0" width="9" height="3" fill="#f5f3ea"/><rect x="62.5" y="22" width="8" height="6.4" fill="#fae8b8"/><rect x="66" y="28.4" width="1.2" height="8" fill="#c8b27a"/><rect x="83" y="25" width="5" height="8" fill="#2c8c78"/><path d="M82 26L84 18L86 24L89 19L88 27Z" fill="#a3a05a"/><ellipse cx="96" cy="26" rx="3" ry="5" fill="#f4f4f0"/><rect x="76" y="33" width="26" height="12" fill="#ecebe4"/><rect x="98" y="38" width="4" height="10" fill="#3f9aa0"/><path d="M4 44Q3 30 10 27Q18 24 24 17Q29 10 32 9.5Q35 10 40 17Q46 24 52 26Q58 28 57 40V46H4Z" fill="#e6d7a6"/><path d="M9 40Q10 30 18 28Q26 24 32 15Q38 24 46 28Q53 30 54 40Z" fill="#f2e3b4"/><path d="M12 31H52M10 35H54M16 27L48 27" stroke="#c9b276" stroke-width="0.8" stroke-dasharray="1.6 2.2"/><path d="M22 34L54 31L58 40L30 44Z" fill="#eeeef2"/><path d="M34 31L42 30L43 37L36 38Z" fill="#b7a47a"/><path d="M45 32L53 33L55 39L47 38Z" fill="#8d6a4c"/><path d="M5 32L20 30L24 42L7 44Z" fill="#b9a368"/><path d="M9 32L17 31L18 41L10 42Z" fill="#b8454c"/><path d="M2 43L40 40L98 43V50L46 54L2 50Z" fill="#d8cca6"/><path d="M2 46L40 42L46 50L44 72L2 70Z" fill="#bfae82"/><path d="M6 48L12 47L14 66L7 66Z" fill="#b04850"/><path d="M22 56Q28 52 33 57Q35 64 30 68Q24 70 22 64Z" fill="#c04a58"/><path d="M16 46L22 45L18 60Z" fill="#a9a06a"/><path d="M40 50Q60 44 98 46V64Q74 62 56 66Q46 68 42 72Z" fill="#efe9da"/><path d="M44 54Q62 49 96 51V60Q72 58 46 65Z" fill="#d8c9a2"/><path d="M50 53V63M56 52V62M62 51.4V61M68 51V60.4M74 50.8V60M80 50.6V59.8M86 50.6V59.8M92 50.8V60" stroke="#f3eee2" stroke-width="1.5"/><path d="M24 68L44 70Q52 66 60 67Q72 64 84 64L80 68Q60 70 46 73L24 72Z" fill="#3a2e22"/><rect x="-2" y="68" width="104" height="10.1" fill="#d9d4bf" opacity="0"/><path d="M-2 70L24 70L26 78.1H-2Z" fill="#8c8468"/><path d="M26 72L46 73Q62 70 84 66L102 64V78.1H26Z" fill="#d6d2c0"/><path d="M64 72L82 70L90 73L70 75Z" fill="#b9b06a"/><rect x="13" y="60" width="7" height="12.5" fill="#cdb87c"/><rect x="14.4" y="65" width="4" height="5.6" fill="#fbc45a"/><rect x="-2" y="-2" width="4" height="80.1" fill="#c9ccd6"/></g></g></svg>
<div class="t" style="left:462.6px;top:1057.9px;font-size:27.0px;color:#fff;font-weight:400;letter-spacing:-0.37px;">CHAMBRE ROYAL NEW GENERATION</div>
<div class="t" style="left:1196.4px;top:1054.5px;font-size:31.5px;color:#fff;font-weight:400;transform:translateX(-50%);margin-left:0.00px;-webkit-text-stroke:0.90px #fff;">8</div>
<div class="t" style="left:1373.0px;top:1054.5px;font-size:31.5px;color:#fff;font-weight:400;transform:translateX(-50%);margin-left:0.00px;-webkit-text-stroke:0.90px #fff;">10</div>
<div class="t" style="left:1608.5px;top:1054.5px;font-size:31.5px;color:#fff;font-weight:400;transform:translateX(-50%);margin-left:0.41px;letter-spacing:0.82px;-webkit-text-stroke:0.90px #fff;">7,100,000</div>
<div class="a" style="left:284.0px;top:1117.6px;width:1472.8px;height:2.0px;background:#353749;"></div>
<svg class="a" style="left:322.8px;top:1128.0px;" width="99.6" height="100.2" viewBox="0 0 100 100.60"><defs><clipPath id="thc3"><rect x="0" y="0" width="100" height="100.60" rx="12.5"/></clipPath><filter id="thb3"><feGaussianBlur stdDeviation="0.45"/></filter></defs><g clip-path="url(#thc3)"><g filter="url(#thb3)"><rect x="-2" y="-2" width="104" height="104" fill="#dfe8ea"/><rect x="-2" y="-2" width="16" height="60" fill="#d5e5ea"/><rect x="14" y="-2" width="6" height="46" fill="#8b9099"/><rect x="20" y="-2" width="14" height="48" fill="#efefe6"/><circle cx="24" cy="8" r="1.8" fill="#d9bf5a"/><circle cx="29" cy="14" r="1.8" fill="#d9bf5a"/><circle cx="24" cy="21" r="1.8" fill="#d9bf5a"/><circle cx="30" cy="28" r="1.8" fill="#d9bf5a"/><circle cx="25" cy="34" r="1.8" fill="#d9bf5a"/><rect x="34" y="-2" width="4.5" height="40" fill="#7f848e"/><rect x="38.5" y="-2" width="14" height="34" fill="#e4eef1"/><rect x="41" y="12" width="6" height="18" fill="#c3ccd4"/><rect x="52.5" y="-2" width="3.4" height="36" fill="#8a8e96"/><rect x="55.9" y="-2" width="12" height="42" fill="#f1ecd6"/><path d="M63 -2H102V48H86L78 30L66 24Z" fill="#8f8b4d"/><path d="M70 -2H102V16L86 22L74 12Z" fill="#a6a262"/><path d="M84 30L102 24V48H88Z" fill="#7d7a42"/><rect x="-2" y="50" width="104" height="40" fill="#b2b4bd"/><rect x="-2" y="72" width="104" height="18" fill="#c1c3cb"/><path d="M-2 50L30 46L66 44L102 50V54H-2Z" fill="#b2b4bd"/><path d="M27 34L60 27.5L80 31L42 40Z" fill="#24252b"/><path d="M27 34L42 40V58L28 49Z" fill="#2b2c33"/><path d="M42 40L64 34.6V51L42 58Z" fill="#0f0f12"/><path d="M30 34L58 29L66 31L40 37Z" fill="#3d4048" opacity="0.6"/><rect x="44" y="28" width="3.2" height="5" fill="#ec9a2e"/><rect x="47.4" y="27" width="3.2" height="6" fill="#d8323c"/><path d="M44 35L52 33L56 36L47 38Z" fill="#8e2a2e"/><path d="M79.5 19L95.5 21.5L93.5 35L77.5 32Z" fill="#f8f8f8"/><path d="M68 34L82 30.5L95.5 34V51L82 52L68 45Z" fill="#2b2c33"/><path d="M67 34L82 30L82 38.5L74 42Z" fill="#f6f6f6"/><path d="M82 38.5L95.5 34V51L82 52Z" fill="#35363e"/><path d="M2.5 33.5L17 37.5L21.5 47.5L6.5 43.5Z" fill="#f3f3f3"/><path d="M2.5 35L6.5 43.5V65L3 60Z" fill="#2b2c33"/><path d="M3 43L22 49.5L40 44.5V70L20 79.5L4 66Z" fill="#3f4149"/><path d="M22 49.5L40 44.5V70L22 78.6Z" fill="#393a42"/><path d="M6.5 43.5L21.5 47.5L17 37.5L8 35Z" fill="#55575f" opacity="0.5"/><path d="M47 55L62 50L77.5 56L62 62.5Z" fill="#fbfbfb"/><path d="M47 55L62 62.5V77L48 69.5Z" fill="#3a3c44"/><path d="M62 62.5L77.5 56V70.5L62 77Z" fill="#2a2b32"/><path d="M67 47L80 44L94 49L80 53.5Z" fill="#fbfbfb"/><path d="M67 47L80 53.5V66L78 65V57L68 52Z" fill="#33353c"/><path d="M80 53.5L94 49V61.5L80 66Z" fill="#27282e"/><rect x="-2" y="88" width="34.5" height="14" fill="#e51c28"/><rect x="32.5" y="88" width="70" height="14" fill="#19b28c"/><path d="M4 91H29M4 94H29M7 90V96M13 90V96M19 90V96M25 90V96" stroke="#ffd9dc" stroke-width="1.1" opacity="0.85"/><path d="M9 97.4H25" stroke="#f6a9ae" stroke-width="0.8"/><path d="M42 93.6H90" stroke="#b4efe0" stroke-width="2.2" stroke-dasharray="3 1.2" opacity="0.9"/><path d="M79 97H91" stroke="#8adfc9" stroke-width="0.8"/></g></g></svg>
<div class="t" style="left:462.6px;top:1163.5px;font-size:27.0px;color:#fff;font-weight:400;letter-spacing:-0.35px;">ENSEMBLE SALON DETENTE 6 CHAISE</div>
<div class="t" style="left:1196.4px;top:1160.1px;font-size:31.5px;color:#fff;font-weight:400;transform:translateX(-50%);margin-left:0.00px;-webkit-text-stroke:0.90px #fff;">10</div>
<div class="t" style="left:1373.0px;top:1160.1px;font-size:31.5px;color:#fff;font-weight:400;transform:translateX(-50%);margin-left:0.00px;-webkit-text-stroke:0.90px #fff;">10</div>
<div class="t" style="left:1608.5px;top:1160.1px;font-size:31.5px;color:#fff;font-weight:400;transform:translateX(-50%);margin-left:0.88px;letter-spacing:1.76px;-webkit-text-stroke:0.90px #fff;">2,850,000</div>
<div class="a" style="left:284.0px;top:1235.4px;width:1472.8px;height:2.0px;background:#353749;"></div>
<div class="t" style="left:1913.9px;top:507.7px;font-size:36.5px;color:#fff;font-weight:700;letter-spacing:0.03px;">Calibrage du modèle</div>
<svg class="a" style="left:2318.5px;top:506.0px;" width="24.7" height="35.0" viewBox="0 0 24.7 35"><path d="M15.5 1.8L2 20.8H11.2L9.4 33L22.6 14H13.4Z" fill="none" stroke="#a0a0ac" stroke-width="3.1" stroke-linejoin="miter"/></svg>
<div class="t" style="left:2348.8px;top:507.5px;font-size:33.0px;color:#a0a0ac;font-weight:400;letter-spacing:-1.10px;-webkit-text-stroke:1.10px #a0a0ac;">0%</div>
<svg class="a" style="left:2449.0px;top:508.8px;" width="26.8" height="30.1" viewBox="0 0 26.8 30.1"><path d="M13.4 1.8L25 8.2V21.8L13.4 28.3L1.8 21.8V8.2ZM1.8 8.2L13.4 14.8L25 8.2M13.4 14.8V28.3" fill="none" stroke="#a0a0ac" stroke-width="3.4" stroke-linejoin="round"/></svg>
<div class="t" style="left:2480.9px;top:507.5px;font-size:33.0px;color:#a0a0ac;font-weight:400;letter-spacing:-1.50px;-webkit-text-stroke:1.10px #a0a0ac;">0%</div>
<svg class="a" style="left:2549.0px;top:511.5px;" width="27.2" height="24.7" viewBox="0 0 27.2 24.7"><path d="M5 23A11.8 11.8 0 1 1 22.2 23" fill="none" stroke="#4b9b70" stroke-width="3.7" stroke-linecap="round"/><path d="M13.8 13.6L17.6 9.4" stroke="#4b9b70" stroke-width="3.6" stroke-linecap="butt" fill="none"/></svg>
<div class="t" style="left:2584.6px;top:508.7px;font-size:31.5px;color:#a0a0ac;font-weight:400;letter-spacing:-1.54px;-webkit-text-stroke:1.10px #a0a0ac;">100%</div>
<div class="a" style="left:2720.0px;top:557.0px;width:175.0px;height:83.0px;background:linear-gradient(to bottom, rgba(20,20,34,0.15), rgba(20,20,34,0.0));"></div>
<div class="a drop" style="left:2679.3px;top:493.0px;width:256.7px;height:63.8px;"></div>
<svg class="a" style="left:2703.3px;top:507.8px;" width="33.6" height="34.0" viewBox="0 0 33.6 34"><path d="M15.2 3.2Q15.2 0.6 11.6 0.8Q7.4 1 6.6 4.6Q2.4 5.6 2.6 10Q-0.4 12.6 0.8 16.6Q-0.6 20.4 2.6 23Q2.2 27.2 6.4 28.4Q7.6 32.6 11.8 33Q15.2 33.2 15.2 30V22.6Q11 22.4 10.6 18.6" fill="#afb2c3"/><path d="M15.2 3.2Q15.2 0.6 11.6 0.8Q7.4 1 6.6 4.6Q2.4 5.6 2.6 10Q-0.4 12.6 0.8 16.6Q-0.6 20.4 2.6 23Q2.2 27.2 6.4 28.4Q7.6 32.6 11.8 33Q15.2 33.2 15.2 30Z" fill="#afb2c3"/><path d="M18.4 3.2Q18.4 0.6 22 0.8Q26.2 1 27 4.6Q31.2 5.6 31 10Q34 12.6 32.8 16.6Q34.2 20.4 31 23Q31.4 27.2 27.2 28.4Q26 32.6 21.8 33Q18.4 33.2 18.4 30Z" fill="#afb2c3"/><path d="M15.2 24Q11.6 23.4 11 19.6M18.4 24Q22 23.4 22.6 19.6" fill="none" stroke="#3f4052" stroke-width="2.2" stroke-linecap="round"/></svg>
<div class="t" style="left:2789.8px;top:515.0px;font-size:26.5px;color:#fff;font-weight:400;letter-spacing:-0.43px;">ML-3.rc</div>
<svg class="a" style="left:2910.0px;top:520.0px;" width="18.0" height="10.5" viewBox="0 0 18 10.5"><path d="M1 1.2L9 9.2L17 1.2" fill="none" stroke="#fff" stroke-width="2.0" stroke-linecap="butt" stroke-linejoin="miter" /></svg>
<div class="a card" style="left:1895.4px;top:635.0px;width:307.0px;height:255.5px;border-radius:52px;"></div>
<div class="t" style="left:1945.4px;top:688.1px;font-size:30.5px;color:#fff;font-weight:700;letter-spacing:0.17px;">On</div>
<div class="a" style="left:2087.7px;top:685.0px;width:64.5px;height:36.6px;border-radius:19px;background:#6482fa;"></div>
<div class="a" style="left:2117.6px;top:686.6px;width:33.2px;height:33.3px;border-radius:50%;background:#fff;box-shadow:-1px 1px 3px rgba(20,30,90,0.35);"></div>
<div class="a" style="left:2138.5px;top:777.8px;width:14.4px;height:14.4px;border-radius:50%;background:#43b564;"></div>
<div class="t" style="left:1945.4px;top:834.1px;font-size:21.8px;color:#fff;font-weight:700;letter-spacing:0.51px;">Auto correction</div>
<svg class="a" style="left:1945.4px;top:760.0px;" width="55.0" height="50.0" viewBox="0 0 55 50"><path d="M2.6 24.1H14L20.9 8.9L34.1 39.8L41.3 24.1H52.4" fill="none" stroke="#62c382" stroke-width="4.4" stroke-linejoin="miter" stroke-linecap="butt"/></svg>
<div class="a card" style="left:2262.3px;top:635.0px;width:307.0px;height:255.5px;border-radius:52px;"></div>
<div class="t" style="left:2312.3px;top:688.1px;font-size:30.5px;color:#fff;font-weight:700;letter-spacing:0.17px;">On</div>
<div class="a" style="left:2454.6px;top:685.0px;width:64.5px;height:36.6px;border-radius:19px;background:#6482fa;"></div>
<div class="a" style="left:2484.5px;top:686.6px;width:33.2px;height:33.3px;border-radius:50%;background:#fff;box-shadow:-1px 1px 3px rgba(20,30,90,0.35);"></div>
<div class="a" style="left:2505.4px;top:777.8px;width:14.4px;height:14.4px;border-radius:50%;background:#43b564;"></div>
<div class="t" style="left:2312.3px;top:834.1px;font-size:21.8px;color:#fff;font-weight:700;letter-spacing:0.61px;">Optimisation</div>
<svg class="a" style="left:2314.5px;top:758.0px;" width="56.0" height="52.0" viewBox="0 0 56 52"><path d="M18.6 13.1Q22.6 22.3 31.8 26.3Q22.6 30.3 18.6 39.5Q14.6 30.3 5.4 26.3Q14.6 22.3 18.6 13.1Z" fill="none" stroke="#62c382" stroke-width="5.2" stroke-linejoin="round"/><path d="M38.7 2.8Q41.0 7.9 46.1 10.2Q41.0 12.5 38.7 17.6Q36.4 12.5 31.3 10.2Q36.4 7.9 38.7 2.8Z" fill="#62c382"/><path d="M40.9 30.1Q43.9 36.7 50.5 39.7Q43.9 42.7 40.9 49.3Q37.9 42.7 31.3 39.7Q37.9 36.7 40.9 30.1Z" fill="#62c382"/></svg>
<div class="a card" style="left:2630.4px;top:635.0px;width:307.0px;height:255.5px;border-radius:52px;"></div>
<div class="t" style="left:2680.4px;top:688.1px;font-size:30.5px;color:#fff;font-weight:700;letter-spacing:0.17px;">On</div>
<div class="a" style="left:2822.7px;top:685.0px;width:64.5px;height:36.6px;border-radius:19px;background:#6482fa;"></div>
<div class="a" style="left:2852.6px;top:686.6px;width:33.2px;height:33.3px;border-radius:50%;background:#fff;box-shadow:-1px 1px 3px rgba(20,30,90,0.35);"></div>
<div class="a" style="left:2873.5px;top:777.8px;width:14.4px;height:14.4px;border-radius:50%;background:#43b564;"></div>
<div class="t" style="left:2680.4px;top:834.1px;font-size:21.8px;color:#fff;font-weight:700;letter-spacing:0.54px;">Sauvegarde</div>
<svg class="a" style="left:2681.9px;top:760.0px;" width="53.0" height="48.0" viewBox="0 0 53 48"><defs><mask id="clm"><rect x="0" y="0" width="53" height="48" fill="#fff"/><circle cx="26" cy="36.4" r="13.2" fill="#000"/></mask></defs><g mask="url(#clm)" fill="#62c382"><circle cx="26" cy="17.8" r="16.3"/><circle cx="11.2" cy="28" r="9.8"/><circle cx="41.8" cy="28" r="9.8"/><rect x="11" y="24" width="31" height="13.8"/></g><path d="M26 46.6V31M18.8 35.6L26 28.4L33.2 35.6" fill="none" stroke="#62c382" stroke-width="4" stroke-linecap="butt" stroke-linejoin="miter"/></svg>
<div class="a" style="left:1780px;top:900px;width:1242px;height:919px;overflow:hidden;">
<div class="a card" style="left:100.8px;top:61.5px;width:1070.4px;height:886.5px;border-radius:60px;"></div>
</div>
<svg class="a" style="left:2071.3px;top:982.9px;" width="280.0" height="280.0" viewBox="-140 -140 280 280"><defs><linearGradient id="gga" gradientUnits="userSpaceOnUse" x1="-113" y1="0" x2="-22" y2="0"><stop offset="0" stop-color="#a9e7a0"/><stop offset="0.25" stop-color="#a0e0a6"/><stop offset="0.58" stop-color="#64b9c8"/><stop offset="0.85" stop-color="#2896e6"/><stop offset="1" stop-color="#008ffb"/></linearGradient><filter id="gsa" x="-30%" y="-30%" width="160%" height="160%"><feGaussianBlur stdDeviation="5"/></filter><filter id="goa" x="-30%" y="-30%" width="160%" height="160%"><feGaussianBlur stdDeviation="9"/></filter></defs><circle cx="1" cy="3" r="112.4" fill="#000" opacity="0.30" filter="url(#goa)"/><circle cx="0" cy="0" r="112.4" fill="#e2e3e7"/><path d="M-26.68 -98.86A102.4 102.4 0 0 0 -69.05 75.62" fill="none" stroke="url(#gga)" stroke-width="23.4" stroke-linecap="round"/><circle cx="3.4" cy="3" r="92.2" fill="#55555f" opacity="0.42" filter="url(#gsa)"/><circle cx="2" cy="0.3" r="91.2" fill="#fff"/></svg>
<div class="t" style="left:2213.7px;top:1078.7px;font-size:28.8px;color:#87878c;font-weight:700;transform:translateX(-50%);margin-left:0.17px;letter-spacing:0.35px;">Objectif</div>
<div class="t" style="left:2213.1px;top:1128.4px;font-size:69.5px;color:#111;font-weight:400;transform:translateX(-50%);margin-left:-0.25px;letter-spacing:-0.50px;">32</div>
<svg class="a" style="left:2670.7px;top:982.9px;" width="280.0" height="280.0" viewBox="-140 -140 280 280"><defs><linearGradient id="ggb" gradientUnits="userSpaceOnUse" x1="-113" y1="0" x2="-22" y2="0"><stop offset="0" stop-color="#a9e7a0"/><stop offset="0.25" stop-color="#a0e0a6"/><stop offset="0.58" stop-color="#64b9c8"/><stop offset="0.85" stop-color="#2896e6"/><stop offset="1" stop-color="#008ffb"/></linearGradient><filter id="gsb" x="-30%" y="-30%" width="160%" height="160%"><feGaussianBlur stdDeviation="5"/></filter><filter id="gob" x="-30%" y="-30%" width="160%" height="160%"><feGaussianBlur stdDeviation="9"/></filter></defs><circle cx="1" cy="3" r="112.4" fill="#000" opacity="0.30" filter="url(#gob)"/><circle cx="0" cy="0" r="112.4" fill="#e2e3e7"/><path d="M-26.68 -98.86A102.4 102.4 0 0 0 -69.05 75.62" fill="none" stroke="url(#ggb)" stroke-width="23.4" stroke-linecap="round"/><circle cx="3.4" cy="3" r="92.2" fill="#55555f" opacity="0.42" filter="url(#gsb)"/><circle cx="2" cy="0.3" r="91.2" fill="#fff"/></svg>
<div class="t" style="left:2813.1px;top:1078.7px;font-size:28.8px;color:#87878c;font-weight:700;transform:translateX(-50%);margin-left:0.17px;letter-spacing:0.35px;">Objectif</div>
<div class="t" style="left:2812.5px;top:1128.4px;font-size:69.5px;color:#111;font-weight:400;transform:translateX(-50%);margin-left:-0.25px;letter-spacing:-0.50px;">32</div>
<svg class="a" style="left:2655.0px;top:1295.0px;" width="255.0" height="35.0" viewBox="0 0 255 35"><circle cx="16.7" cy="17" r="12.6" fill="none" stroke="#6e8192" stroke-width="2.3"/><path d="M10 17H23.4M16.7 10.3V23.7" stroke="#6e8192" stroke-width="2.6" fill="none"/><circle cx="56.8" cy="17" r="12.6" fill="none" stroke="#6e8192" stroke-width="2.3"/><path d="M50 17H63.6" stroke="#6e8192" stroke-width="2.6" fill="none"/><circle cx="99" cy="13.2" r="9.3" fill="none" stroke="#008ffb" stroke-width="3.4"/><path d="M106 20.5L116.6 31" stroke="#008ffb" stroke-width="3.6" fill="none"/><path d="M94.4 13.2H103.6M99 8.6V17.8" stroke="#008ffb" stroke-width="2.2" fill="none"/><path d="M142 8.6Q142 6 144.4 6Q146.6 6 146.6 8.6V4.6Q146.6 2.2 148.8 2.2Q151.2 2.2 151.2 4.6V5.6Q151.2 3.4 153.4 3.4Q155.8 3.4 155.8 5.8V9Q155.8 7 157.6 7Q159.6 7 159.6 9.4V22Q159.6 31.6 150.6 31.6H148.4Q143.6 31.6 140.6 27.6L132.2 19.4Q131 17.8 132.6 16.6Q134.6 15.6 136.4 17L142 21.4Z" fill="#fff" stroke="#6e8192" stroke-width="1.4" stroke-linejoin="round"/><path d="M146.6 8.6V16M151.2 5.6V16M155.8 9V16.4" stroke="#6e8192" stroke-width="1.3" fill="none"/><path d="M177 19.2L193.4 3L209.8 19.2H204.6V32H197V23.2H189.8V32H182.2V19.2Z" fill="#6e8192"/><path d="M218 7.4H249M218 17H249M218 26.6H249" stroke="#6e8192" stroke-width="2.9" fill="none"/></svg>
<svg class="a" style="left:1900.0px;top:1320.0px;" width="1060.0" height="499.0" viewBox="0 0 1060 499"><defs><linearGradient id="fa1" x1="0" y1="0" x2="0" y2="1"><stop offset="0" stop-color="#3390ee" stop-opacity="0.46"/><stop offset="1" stop-color="#6197d4" stop-opacity="0.40"/></linearGradient><linearGradient id="fa2" x1="0" y1="0" x2="0" y2="1"><stop offset="0" stop-color="#5af0a5" stop-opacity="0.36"/><stop offset="1" stop-color="#7ec6a5" stop-opacity="0.36"/></linearGradient><clipPath id="plc"><rect x="103.9" y="14.5" width="899.1" height="364.6"/></clipPath></defs><path d="M103.9 377.6H1003.0" stroke="#e1e1e6" stroke-width="1.6"/><path d="M103.9 319.5H1003.0" stroke="#e1e1e6" stroke-width="1.6"/><path d="M103.9 261.4H1003.0" stroke="#e1e1e6" stroke-width="1.6"/><path d="M103.9 203.3H1003.0" stroke="#e1e1e6" stroke-width="1.6"/><path d="M103.9 145.2H1003.0" stroke="#e1e1e6" stroke-width="1.6"/><path d="M103.9 87.1H1003.0" stroke="#e1e1e6" stroke-width="1.6"/><path d="M103.9 29.0H1003.0" stroke="#e1e1e6" stroke-width="1.6"/><path d="M103.9 377.6V389.6" stroke="#d7d7dc" stroke-width="1.6"/><path d="M242.2 377.6V389.6" stroke="#d7d7dc" stroke-width="1.6"/><path d="M380.5 377.6V389.6" stroke="#d7d7dc" stroke-width="1.6"/><path d="M518.9 377.6V389.6" stroke="#d7d7dc" stroke-width="1.6"/><path d="M657.2 377.6V389.6" stroke="#d7d7dc" stroke-width="1.6"/><path d="M795.5 377.6V389.6" stroke="#d7d7dc" stroke-width="1.6"/><path d="M933.8 377.6V389.6" stroke="#d7d7dc" stroke-width="1.6"/><g clip-path="url(#plc)"><path d="M103.9 287.5C176.5 287.5 238.8 261.4 311.4 261.4C359.8 261.4 401.3 296.3 449.7 296.3C498.1 296.3 539.6 229.4 588.0 229.4C636.4 229.4 677.9 255.6 726.3 255.6C774.8 255.6 816.2 61.0 864.7 61.0C913.1 61.0 954.6 87.1 1003.0 87.1L1003.0 377.6L103.9 377.6Z" fill="url(#fa1)"/><path d="M103.9 287.5C176.5 287.5 238.8 261.4 311.4 261.4C359.8 261.4 401.3 296.3 449.7 296.3C498.1 296.3 539.6 229.4 588.0 229.4C636.4 229.4 677.9 255.6 726.3 255.6C774.8 255.6 816.2 61.0 864.7 61.0C913.1 61.0 954.6 87.1 1003.0 87.1" fill="none" stroke="#008ffb" stroke-width="7" stroke-linecap="butt"/><path d="M103.9 345.6C176.5 345.6 238.8 284.6 311.4 284.6C359.8 284.6 401.3 246.9 449.7 246.9C498.1 246.9 539.6 284.6 588.0 284.6C636.4 284.6 677.9 278.8 726.3 278.8C774.8 278.8 816.2 226.5 864.7 226.5C913.1 226.5 954.6 258.5 1003.0 258.5L1003.0 377.6L103.9 377.6Z" fill="url(#fa2)"/><path d="M103.9 345.6C176.5 345.6 238.8 284.6 311.4 284.6C359.8 284.6 401.3 246.9 449.7 246.9C498.1 246.9 539.6 284.6 588.0 284.6C636.4 284.6 677.9 278.8 726.3 278.8C774.8 278.8 816.2 226.5 864.7 226.5C913.1 226.5 954.6 258.5 1003.0 258.5" fill="none" stroke="#00e396" stroke-width="7" stroke-linecap="butt"/></g></svg>
<div class="t" style="left:1983.0px;top:1687.6px;font-size:20.8px;color:#fff;font-weight:400;transform:translateX(-100%);margin-left:0.00px;">0</div>
<div class="t" style="left:1983.0px;top:1629.5px;font-size:20.8px;color:#fff;font-weight:400;transform:translateX(-100%);margin-left:0.00px;">20</div>
<div class="t" style="left:1983.0px;top:1571.4px;font-size:20.8px;color:#fff;font-weight:400;transform:translateX(-100%);margin-left:0.00px;">40</div>
<div class="t" style="left:1983.0px;top:1513.3px;font-size:20.8px;color:#fff;font-weight:400;transform:translateX(-100%);margin-left:0.00px;">60</div>
<div class="t" style="left:1983.0px;top:1455.2px;font-size:20.8px;color:#fff;font-weight:400;transform:translateX(-100%);margin-left:0.00px;">80</div>
<div class="t" style="left:1983.0px;top:1397.1px;font-size:20.8px;color:#fff;font-weight:400;transform:translateX(-100%);margin-left:0.00px;">100</div>
<div class="t" style="left:1983.0px;top:1339.0px;font-size:20.8px;color:#fff;font-weight:400;transform:translateX(-100%);margin-left:0.00px;">120</div>
<div class="t" style="left:2003.9px;top:1726.9px;font-size:23.0px;color:#fff;font-weight:400;transform:translateX(-50%);margin-left:0.09px;letter-spacing:0.19px;">00:00</div>
<div class="t" style="left:2142.2px;top:1726.9px;font-size:23.0px;color:#fff;font-weight:400;transform:translateX(-50%);margin-left:0.09px;letter-spacing:0.19px;">01:00</div>
<div class="t" style="left:2280.5px;top:1726.9px;font-size:23.0px;color:#fff;font-weight:400;transform:translateX(-50%);margin-left:0.09px;letter-spacing:0.19px;">02:00</div>
<div class="t" style="left:2418.9px;top:1726.9px;font-size:23.0px;color:#fff;font-weight:400;transform:translateX(-50%);margin-left:0.09px;letter-spacing:0.19px;">03:00</div>
<div class="t" style="left:2557.2px;top:1726.9px;font-size:23.0px;color:#fff;font-weight:400;transform:translateX(-50%);margin-left:0.09px;letter-spacing:0.19px;">04:00</div>
<div class="t" style="left:2695.5px;top:1726.9px;font-size:23.0px;color:#fff;font-weight:400;transform:translateX(-50%);margin-left:0.09px;letter-spacing:0.19px;">05:00</div>
<div class="t" style="left:2833.8px;top:1726.9px;font-size:23.0px;color:#fff;font-weight:400;transform:translateX(-50%);margin-left:0.09px;letter-spacing:0.19px;">06:00</div>
<div class="a" style="left:2297.8px;top:1767.6px;width:30.0px;height:30.0px;border-radius:50%;background:#008ffb;border:2px solid #fff;"></div>
<div class="t" style="left:2331.5px;top:1772.0px;font-size:23.0px;color:#343640;font-weight:400;letter-spacing:-0.09px;">series1</div>
<div class="a" style="left:2429.0px;top:1767.6px;width:30.0px;height:30.0px;border-radius:50%;background:#00e396;border:2px solid #fff;"></div>
<div class="t" style="left:2462.6px;top:1772.0px;font-size:23.0px;color:#343640;font-weight:400;letter-spacing:0.26px;">series2</div>
<svg class="a" style="left:230.7px;top:1828.0px;" width="46.8" height="47.2" viewBox="0 0 46.8 47.2"><defs><clipPath id="apc"><circle cx="23.7" cy="23.2" r="19.6"/></clipPath></defs><rect x="0" y="0" width="46.8" height="47.2" rx="9" fill="#5ba86e"/><circle cx="23.7" cy="23.2" r="19.6" fill="#fbb040"/><g clip-path="url(#apc)"><rect x="2" y="2" width="44" height="13.6" fill="#fff"/><rect x="4.6" y="2" width="4.6" height="13.6" fill="#ee3e4e"/><rect x="13.8" y="2" width="4.6" height="13.6" fill="#ee3e4e"/><rect x="23" y="2" width="4.6" height="13.6" fill="#ee3e4e"/><rect x="32.2" y="2" width="4.6" height="13.6" fill="#ee3e4e"/><rect x="41.4" y="2" width="4.6" height="13.6" fill="#ee3e4e"/><path d="M16 21L31 31M31 21L16 31" stroke="#f7d070" stroke-width="2.6"/><circle cx="23.5" cy="26" r="3" fill="#f3c04c"/></g><rect x="21" y="39.5" width="5.4" height="4.6" fill="#c98a3a"/></svg>
<div class="t" style="left:298.6px;top:1831.3px;font-size:36.5px;color:#fff;font-weight:700;letter-spacing:-0.75px;">fiistore</div>
<svg class="a" style="left:418.0px;top:1834.4px;" width="109.0" height="38.4" viewBox="0 0 109 38.4"><path d="M0.5 19.2L10 11.2V27.2Z" fill="#2d3e50"/><rect x="8.6" y="0" width="99.4" height="38.4" rx="19.2" fill="#2d3e50"/></svg>
<div class="t" style="left:437.7px;top:1841.5px;font-size:25.3px;color:#fff;font-weight:700;letter-spacing:0.94px;">1.2.37</div>
<div class="t" style="left:544.5px;top:1840.6px;font-size:26.3px;color:#fff;font-weight:400;letter-spacing:0.41px;">Copyright© 2015 - 2025™</div>
<svg class="a" style="left:2316.0px;top:1840.0px;" width="22.0" height="28.0" viewBox="0 0 22 28"><path d="M4.8 4.5L17.4 13.8L4.8 23.8" fill="none" stroke="#fff" stroke-width="4.4" stroke-linejoin="miter"/></svg>
<svg class="a" style="left:2357.5px;top:1833.8px;" width="40.0" height="40.0" viewBox="0 0 40 40"><path d="M8.85 9.96A15.0 15.0 0 0 1 34.85 22.09" fill="none" stroke="#b07ce0" stroke-width="4.4"/><path d="M31.15 30.04A15.0 15.0 0 0 1 5.15 17.91" fill="none" stroke="#b07ce0" stroke-width="4.4"/><path d="M29.55 21.00L40.29 22.13L32.14 28.82Z" fill="#b07ce0"/><path d="M10.45 19.00L-0.29 17.87L7.86 11.18Z" fill="#b07ce0"/></svg>
<svg class="a" style="left:2424.5px;top:1835.5px;" width="35.0" height="35.0" viewBox="0 0 38 38"><g transform="rotate(42 19 19)" fill="none" stroke="#ff9808" stroke-width="3.5" stroke-linejoin="round" stroke-linecap="round"><path d="M16 -3.5Q19 -6 22 -3.5V10H16Z"/><path d="M12 10H26Q28.5 10 28.5 12.5V17H9.5V12.5Q9.5 10 12 10Z"/><path d="M9.5 17H28.5L31.5 34Q25 38.5 19 35Q13 38 6.5 34Z"/><path d="M15.5 27.5L14.5 35.5"/></g></svg>
<div class="a" style="left:2494.1px;top:1840.3px;width:3.8px;height:29.5px;background:#9b9ba5;"></div>
<div class="a" style="left:2570.0px;top:1840.3px;width:3.8px;height:29.5px;background:#9b9ba5;"></div>
<div class="a" style="left:2645.9px;top:1840.3px;width:3.8px;height:29.5px;background:#9b9ba5;"></div>
<svg class="a" style="left:2517.0px;top:1834.4px;" width="34.2" height="37.2" viewBox="0 0 34.2 37.2"><path d="M1.6 9H32.6" fill="none" stroke="#f06e91" stroke-width="3.2" stroke-linecap="round" stroke-linejoin="round" /><path d="M10.6 9V5Q10.6 1.8 13.8 1.8H20.4Q23.6 1.8 23.6 5V9" fill="none" stroke="#f06e91" stroke-width="3.2" stroke-linecap="round" stroke-linejoin="round" /><path d="M5 9V31Q5 35.6 9.6 35.6H24.6Q29.2 35.6 29.2 31V9" fill="none" stroke="#f06e91" stroke-width="3.2" stroke-linecap="round" stroke-linejoin="round" /><path d="M13.2 17V27.6M21 17V27.6" fill="none" stroke="#f06e91" stroke-width="3.0" stroke-linecap="butt" stroke-linejoin="round" /></svg>
<svg class="a" style="left:2591.0px;top:1834.4px;" width="36.2" height="36.6" viewBox="0 0 36.2 36.6"><path d="M11.5 2L15 6.2M24.5 2L21 6.2" fill="none" stroke="#f04458" stroke-width="3.0" stroke-linecap="round" stroke-linejoin="round" /><path d="M11.2 11.5Q12.4 5.6 18 5.6Q23.6 5.6 24.8 11.5Z" fill="none" stroke="#f04458" stroke-width="3.0" stroke-linecap="round" stroke-linejoin="round" /><path d="M9.6 14.6Q9 20 9.4 24Q10.2 30 14.5 33.4" fill="none" stroke="#f04458" stroke-width="3.0" stroke-linecap="round" stroke-linejoin="round" /><path d="M26.4 14.6Q26.8 17 26.8 19" fill="none" stroke="#f04458" stroke-width="3.0" stroke-linecap="round" stroke-linejoin="round" /><path d="M3 8Q3.4 13 9.4 15M33 8Q32.6 13 26.6 15M1.8 21.8H9M9.8 28Q5 29.4 4.4 35" fill="none" stroke="#f04458" stroke-width="3.0" stroke-linecap="round" stroke-linejoin="round" /><path d="M18 12.4V19" fill="none" stroke="#f04458" stroke-width="3.0" stroke-linecap="round" stroke-linejoin="round" /><path d="M19.4 22.4L32.8 29.6L19.4 36.4Z" fill="none" stroke="#f04458" stroke-width="3.0" stroke-linecap="round" stroke-linejoin="round" /></svg>
<svg class="a" style="left:2675.8px;top:1834.6px;" width="40.0" height="40.0" viewBox="0 0 40 40"><circle cx="20" cy="20" r="7.8" fill="none" stroke="#fff" stroke-width="3.2"/><path d="M33.40 20.00L38.00 20.00" stroke="#fff" stroke-width="3.6" fill="none"/><path d="M29.48 29.48L32.73 32.73" stroke="#fff" stroke-width="3.6" fill="none"/><path d="M20.00 33.40L20.00 38.00" stroke="#fff" stroke-width="3.6" fill="none"/><path d="M10.52 29.48L7.27 32.73" stroke="#fff" stroke-width="3.6" fill="none"/><path d="M6.60 20.00L2.00 20.00" stroke="#fff" stroke-width="3.6" fill="none"/><path d="M10.52 10.52L7.27 7.27" stroke="#fff" stroke-width="3.6" fill="none"/><path d="M20.00 6.60L20.00 2.00" stroke="#fff" stroke-width="3.6" fill="none"/><path d="M29.48 10.52L32.73 7.27" stroke="#fff" stroke-width="3.6" fill="none"/></svg>
<svg class="a" style="left:2748.9px;top:1839.1px;" width="32.0" height="32.0" viewBox="0 0 32 32"><circle cx="16" cy="16" r="13.8" fill="none" stroke="#fff" stroke-width="2.4"/><path d="M10 16H22" stroke="#fff" stroke-width="2.8" fill="none"/></svg>
<svg class="a" style="left:2810.8px;top:1839.1px;" width="32.0" height="32.0" viewBox="0 0 32 32"><circle cx="16" cy="16" r="13.8" fill="none" stroke="#fff" stroke-width="2.4"/><path d="M10 16H22M16 10V22" stroke="#fff" stroke-width="2.8" fill="none"/></svg>
<div class="a" style="left:2882.7px;top:1848.7px;width:14.2px;height:14.2px;border-radius:50%;background:#64aa73;"></div>
<div class="a" style="left:2912.8px;top:1848.7px;width:14.2px;height:14.2px;border-radius:50%;background:#ebebf0;"></div>
<div class="a" style="left:2948.0px;top:1834.9px;width:40.0px;height:40.0px;border-radius:11px;background:#1e90ff;"></div>
<svg class="a" style="left:2952.1px;top:1839.1px;" width="32.0" height="32.0" viewBox="-16 -16 32 32"><rect x="-3.9" y="-14.2" width="7.8" height="8" rx="1.6" fill="#fff" transform="rotate(0)"/><rect x="-3.9" y="-14.2" width="7.8" height="8" rx="1.6" fill="#fff" transform="rotate(60)"/><rect x="-3.9" y="-14.2" width="7.8" height="8" rx="1.6" fill="#fff" transform="rotate(120)"/><rect x="-3.9" y="-14.2" width="7.8" height="8" rx="1.6" fill="#fff" transform="rotate(180)"/><rect x="-3.9" y="-14.2" width="7.8" height="8" rx="1.6" fill="#fff" transform="rotate(240)"/><rect x="-3.9" y="-14.2" width="7.8" height="8" rx="1.6" fill="#fff" transform="rotate(300)"/><circle cx="0" cy="0" r="10.6" fill="#fff"/><circle cx="0" cy="0" r="4.5" fill="#1e90ff"/></svg>
<div class="a" style="left:2977.1px;top:1830.1px;width:27.3px;height:25.0px;border-radius:6.5px;background:#ffb00f;"></div>
<div class="t" style="left:2990.7px;top:1835.1px;font-size:17.5px;color:#fff;font-weight:400;transform:translateX(-50%);margin-left:0.00px;">3</div>
</div></body></html>
